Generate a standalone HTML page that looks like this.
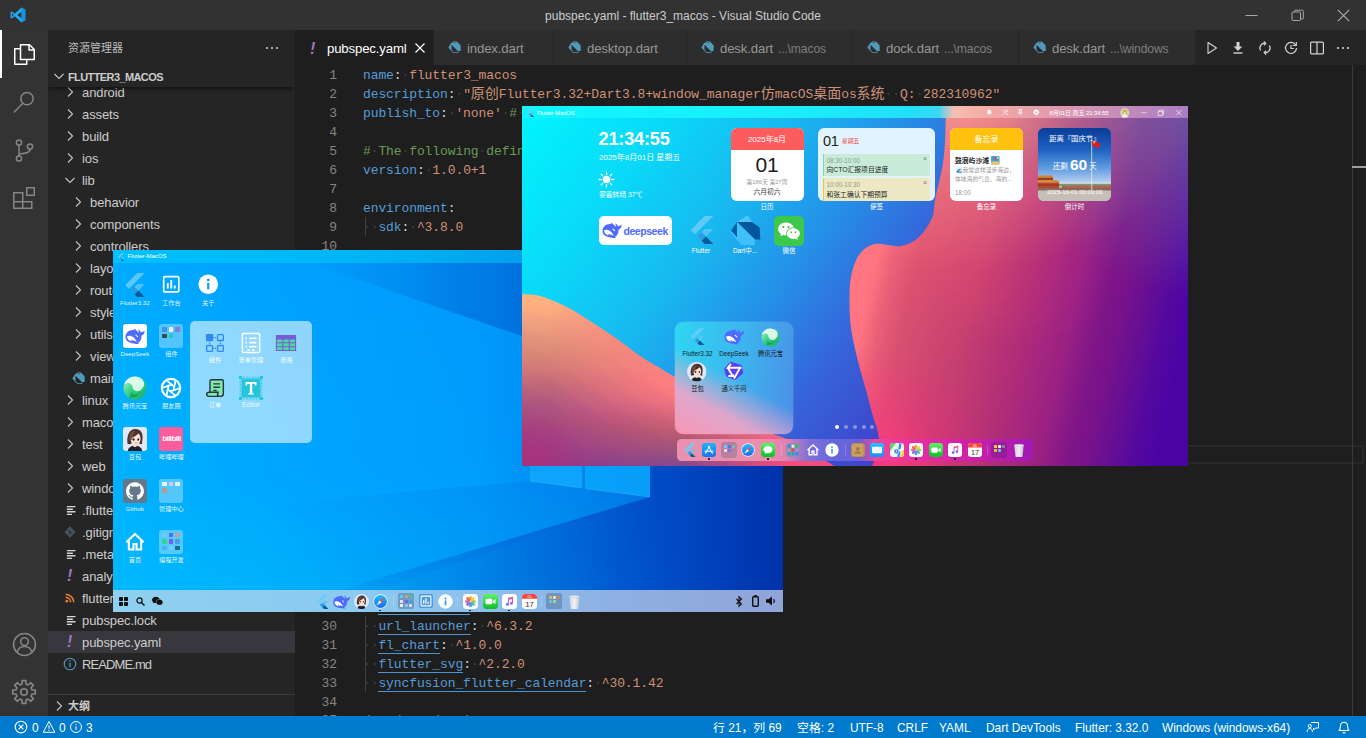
<!DOCTYPE html>
<html lang="zh-CN">
<head>
<meta charset="utf-8">
<title>pubspec.yaml - flutter3_macos - Visual Studio Code</title>
<style>
*{box-sizing:border-box;margin:0;padding:0}
html,body{width:1366px;height:738px;overflow:hidden;background:#1e1e1e}
body{font-family:"Liberation Sans","Noto Sans CJK SC",sans-serif;font-size:13px;color:#ccc;position:relative}
.abs{position:absolute}
svg{display:block;overflow:visible}
/* ---------- vscode chrome ---------- */
#titlebar{position:absolute;left:0;top:0;width:1366px;height:30px;background:#323233}
#titlebar .ttl{position:absolute;left:0;width:1366px;top:1px;height:30px;line-height:30px;text-align:center;font-size:12px;color:#cccccc;letter-spacing:0}
#activity{position:absolute;left:0;top:30px;width:48px;height:686px;background:#333333}
#sidebar{position:absolute;left:48px;top:30px;width:247px;height:686px;background:#252526;overflow:hidden}
#editor{position:absolute;left:295px;top:30px;width:1071px;height:686px;background:#1e1e1e;overflow:hidden}
#status{position:absolute;left:0;top:716px;width:1366px;height:22px;background:#007acc;color:#fff;font-size:11.9px;line-height:22px;white-space:nowrap}
#status span{position:absolute;top:1px}
/* sidebar */
.sb-title{position:absolute;left:20px;top:1px;height:35px;line-height:35px;font-size:11px;color:#bbbbbb}
.sb-head{position:absolute;left:0;top:35px;width:247px;height:22px;line-height:22px;font-size:11px;letter-spacing:-.6px;font-weight:bold;color:#cccccc;padding-left:20px;padding-top:1px;background:#252526;z-index:3;box-shadow:0 3px 3px -1px rgba(0,0,0,.45)}
.row{position:absolute;left:0;width:247px;height:22px;line-height:22px;font-size:13px;letter-spacing:-.1px;color:#cccccc;white-space:nowrap}
.row.sel{background:#37373d}
.row svg.chev{position:absolute;top:3px}
.row .ic{position:absolute;top:0}
.row .nm{position:absolute;top:1px}
/* tabs */
#tabs{position:absolute;left:0;top:0;width:1071px;height:35px;background:#252526}
.tab{position:absolute;top:0;height:35px;background:#2d2d2d;border-right:1px solid #252526;line-height:35px;font-size:13.2px;letter-spacing:-.15px;color:#969696;white-space:nowrap}
.tab.act{background:#1e1e1e;color:#ffffff}
.tab .lbl{position:absolute;top:1px}
.tab .desc{font-size:12.2px;color:#7e7e7e;margin-left:5px}
/* code */
.ln{position:absolute;left:0;width:42px;text-align:right;font-family:"Liberation Mono",monospace;font-size:13px;letter-spacing:-0.1px;color:#858585;height:19px;line-height:19px}
.cl{position:absolute;left:68px;font-family:"Liberation Mono","Noto Sans CJK SC",monospace;font-size:13px;letter-spacing:-0.1px;height:19px;line-height:19px;white-space:pre;color:#d4d4d4}
.z{font-size:14px;letter-spacing:0}.k{color:#569cd6}.s{color:#ce9178}.c{color:#6a9955}.w{color:#404040}
.u{display:inline-block;height:18px;vertical-align:top;box-shadow:inset 0 -1px 0 #4e94ce}
.t{white-space:nowrap}
.lab{font-size:6.5px;line-height:9px;color:#fff;text-align:center}
.lab2{font-size:6.3px;line-height:9px;color:#1a1a1a;text-align:center}
i.d{position:absolute;width:3px;height:3px;border-radius:.8px}
.wl{font-size:6.2px;line-height:9px;color:rgba(255,255,255,.92);text-align:center}
</style>
</head>
<body>

<svg width="0" height="0" style="position:absolute">
<defs>
<linearGradient id="gAS" x1="0" y1="0" x2="0" y2="1"><stop offset="0" stop-color="#1fb3f8"/><stop offset="1" stop-color="#1a70ee"/></linearGradient>
<linearGradient id="gMsg" x1="0" y1="0" x2="0" y2="1"><stop offset="0" stop-color="#5ff26a"/><stop offset="1" stop-color="#0cbd2a"/></linearGradient>
<linearGradient id="gSaf" x1="0" y1="0" x2="0" y2="1"><stop offset="0" stop-color="#1ec0fb"/><stop offset="1" stop-color="#1a6af0"/></linearGradient>
<linearGradient id="gYB" x1="0" y1="0" x2="1" y2="1"><stop offset="0" stop-color="#b8f5d0"/><stop offset=".5" stop-color="#2fcf82"/><stop offset="1" stop-color="#18a865"/></linearGradient>
<linearGradient id="gMail" x1="0" y1="0" x2="0" y2="1"><stop offset="0" stop-color="#1fc4ff"/><stop offset="1" stop-color="#1a8cf5"/></linearGradient>
<linearGradient id="gMus" x1="0" y1="0" x2="0" y2="1"><stop offset="0" stop-color="#fb4a6a"/><stop offset=".55" stop-color="#c850e0"/><stop offset="1" stop-color="#3a80f8"/></linearGradient><linearGradient id="gTrash" x1="0" y1="0" x2="1" y2="0"><stop offset="0" stop-color="#d4d8dc"/><stop offset=".5" stop-color="#f4f6f8"/><stop offset="1" stop-color="#c4c8cc"/></linearGradient>
<symbol id="i-flutter" viewBox="0 0 24 24"><path d="M14.300 0L2.300 12l3.700 3.700L21.700 0z" fill="#6ccbf9" opacity=".85"/><path d="M14.300 11.100L7.900 17.500l3.700 3.700 10.100-10.100z" fill="#5ac3f5" opacity=".9"/><path d="M11.600 21.200L14.300 24h7.400l-6.500-6.500z" fill="#0a5a9c"/><path d="M7.900 17.500l3.700-3.700 3.700 3.700-3.700 3.700z" fill="#2a9de0"/></symbol>
<symbol id="i-dart" viewBox="0 0 24 24"><path d="M4.900 4.800L12.100.3c.9-.4 2-.2 2.700.5l2.200 4z" fill="#5ccbfa" opacity=".75"/><path d="M4.900 4.800H17l6.300 4.600.7 9.800h-4.600z" fill="#01579b"/><path d="M0 12l4.900-7.200v12.700z" fill="#0a5fa3"/><path d="M4.900 4.800l14.500 14.400v4.500H8.200l-3.300-6.200z" fill="#40c0fb"/><path d="M0 12l4.900 5.500 3.300 6.200L.9 14.500C.2 13.700 0 12.800 0 12z" fill="#40c4ff"/></symbol>
<symbol id="i-whale" viewBox="0 0 24 24"><path d="M2.500 13C2.500 8.800 5.800 6 10 6c.7 0 1.300-.7 2.100-.7.500 0 .6.600 1 .9 1 .5 1.800 1.400 2.400 2.700.6-1.300.2-2.600-.4-3.700 1.400.6 2.300 1.700 2.600 3 1.400.1 2.800-.5 3.900-1.600.2 2.700-1.200 4.400-3.200 5.100.2 1 .1 2-.2 3-.5 1.900-1.700 3.300-3.300 4.200l1.600.7c-1.600.5-3.600.4-5.200-.2C6 18.900 2.500 17 2.500 13z" fill="#4d6bfe"/><path d="M4 12.300c1.600-1.200 4.600-.7 6.700 1.100 1.500 1.300 2.600 3 3.100 4.400-1.100-.3-2.100-.8-2.900-1.600l-1 1.100-.9-1.900c-.5.400-.8 1.100-.8 1.900C5.600 16.600 4 14.700 4 12.300z" fill="#fff"/><path d="M12.900 11.100l1.700 1.600" stroke="#fff" stroke-width="1.100" stroke-linecap="round"/></symbol>
<symbol id="i-yuanbao" viewBox="0 0 24 24"><circle cx="12" cy="12" r="11.500" fill="url(#gYB)"/><path d="M12 .5a11.500 11.500 0 0 0-11 8c3-2.500 8-2 8.500 2.500.5 4.500 6 5.500 9 2.500 2.500-2.500 4-6 1-10A11.400 11.400 0 0 0 12 .5z" fill="#eafff2" opacity=".9"/><path d="M6 21.500c4 1 10-1 11-6-2 3.500-7 4-8.500.5-.8 3-1.500 4.500-2.500 5.500z" fill="#0d8a50" opacity=".55"/></symbol>
<symbol id="i-doubao" viewBox="0 0 24 24"><rect width="24" height="24" rx="3" fill="#dde8fc"/><path d="M4.800 24c.3-3.200 3-5.200 7.200-5.200s6.900 2 7.200 5.200z" fill="#1f1f25"/><path d="M10.300 16.500h3.400v3c-1.100.8-2.300.8-3.400 0z" fill="#f9d8c6"/><path d="M4.600 17C3.300 8.800 6.300 2 12.300 2c5.200 0 7.900 4.200 7.200 9.700-.3 2.400-.6 4-.3 5.400-1.600.3-2.900-.2-3.800-1.300H9.600c-1 1.300-2.900 1.600-5 1.200z" fill="#4e332a"/><path d="M7.800 11.200c-.3 4 1.700 6.800 4.800 6.800 3 0 5-2.800 4.900-6.600-.1-2.400-.9-4-2.100-4.900-1.500 1.800-4.200 3.500-7.600 4.700z" fill="#fce2d4"/><path d="M6 12.800C6.300 6.500 8.900 3.900 12.300 3.900 10.700 5.500 9.600 8.600 9.300 13z" fill="#7a5444" opacity=".8"/><ellipse cx="10.600" cy="12.500" rx=".95" ry="1.200" fill="#2a1e1c"/><ellipse cx="15.300" cy="12.500" rx=".9" ry="1.200" fill="#2a1e1c"/><path d="M12 15.700q1.100.8 2.200 0" stroke="#e2736e" stroke-width=".8" fill="none"/></symbol>
<symbol id="i-doubao-c" viewBox="0 0 24 24"><circle cx="12" cy="12" r="12" fill="#dde8fc"/><path d="M5.800 22.300c.6-2.600 3-3.900 6.200-3.900s5.600 1.300 6.200 3.900a12 12 0 0 1-12.400 0z" fill="#1f1f25"/><path d="M10.300 16.500h3.400v2.600c-1.100.8-2.300.8-3.400 0z" fill="#f9d8c6"/><path d="M4.800 16.300C3.600 8.500 6.500 2.200 12.300 2.200c5 0 7.600 4 6.900 9.300-.3 2.300-.6 3.800-.3 5.200-1.500.3-2.800-.2-3.600-1.200H9.600c-1 1.200-2.800 1.500-4.800.8z" fill="#4e332a"/><path d="M8 11c-.3 3.800 1.600 6.500 4.600 6.500 2.900 0 4.800-2.700 4.700-6.300-.1-2.300-.9-3.800-2-4.700-1.400 1.700-4 3.300-7.300 4.500z" fill="#fce2d4"/><path d="M6.200 12.500C6.500 6.500 9 4 12.300 4c-1.500 1.500-2.600 4.500-2.900 8.700z" fill="#7a5444" opacity=".8"/><ellipse cx="10.600" cy="12.300" rx=".9" ry="1.100" fill="#2a1e1c"/><ellipse cx="15.200" cy="12.300" rx=".85" ry="1.100" fill="#2a1e1c"/><path d="M12 15.300q1 .7 2 0" stroke="#e2736e" stroke-width=".8" fill="none"/></symbol>
<symbol id="i-safari" viewBox="0 0 24 24"><circle cx="12" cy="12" r="11.500" fill="#f2f4f6"/><circle cx="12" cy="12" r="10.300" fill="url(#gSaf)"/><path d="M18.500 5.500l-5 8-3-3z" fill="#ff4a3d"/><path d="M5.500 18.500l5-8 3 3z" fill="#fff"/></symbol>
<symbol id="i-appstore" viewBox="0 0 24 24"><rect width="24" height="24" rx="5.500" fill="url(#gAS)"/><path d="M12.800 5.500L7.200 16M11.200 5.500l5.600 10.500M5 14h14M7.200 16l-1 1.800M16.800 16l1 1.800" stroke="#fff" stroke-width="1.700" stroke-linecap="round" fill="none"/></symbol>
<symbol id="i-messages" viewBox="0 0 24 24"><rect width="24" height="24" rx="5.500" fill="url(#gMsg)"/><path d="M12 5c4.400 0 7.800 2.800 7.800 6.300s-3.400 6.300-7.800 6.300c-.8 0-1.600-.1-2.300-.3-.9.900-2.200 1.400-3.500 1.400.8-.7 1.200-1.600 1.200-2.500C5.400 15 4.200 13.300 4.200 11.300 4.200 7.800 7.600 5 12 5z" fill="#fff"/></symbol>
<symbol id="i-launch" viewBox="0 0 24 24"><rect width="24" height="24" rx="5" fill="#8a8fa8" opacity=".75"/><g><rect x="3" y="3" width="5" height="5" rx="1.200" fill="#3b82f6"/><rect x="9.500" y="3" width="5" height="5" rx="1.200" fill="#e8e8e8"/><rect x="16" y="3" width="5" height="5" rx="1.200" fill="#22c55e"/><rect x="3" y="9.500" width="5" height="5" rx="1.200" fill="#94a3b8"/><rect x="9.500" y="9.500" width="5" height="5" rx="1.200" fill="#ef4444"/><rect x="16" y="9.500" width="5" height="5" rx="1.200" fill="#a78bfa"/><rect x="3" y="16" width="5" height="5" rx="1.200" fill="#14b8a6"/><rect x="9.500" y="16" width="5" height="5" rx="1.200" fill="#0ea5e9"/><rect x="16" y="16" width="5" height="5" rx="1.200" fill="#3b82f6"/></g></symbol>
<symbol id="i-home" viewBox="0 0 24 24"><path d="M2.500 12.200L12 3.300l9.500 8.900M5.300 10.200v10h5v-6h3.400v6h5v-10" fill="none" stroke="#fff" stroke-width="2.300" stroke-linejoin="miter"/></symbol>
<symbol id="i-info" viewBox="0 0 24 24"><circle cx="12" cy="12" r="11.500" fill="#fff"/><rect x="10.700" y="10.300" width="2.600" height="7.700" fill="#2196f3"/><circle cx="12" cy="7" r="1.600" fill="#2196f3"/></symbol>
<symbol id="i-contacts" viewBox="0 0 24 24"><rect width="24" height="24" rx="5.500" fill="#b98e4e"/><rect x="2" y="1.500" width="19" height="21" rx="3" fill="#c9a162"/><circle cx="11.500" cy="10" r="3.200" fill="#a57b3e"/><path d="M5.500 18.500c.6-3 3-4.200 6-4.200s5.400 1.200 6 4.200z" fill="#a57b3e"/></symbol>
<symbol id="i-mail" viewBox="0 0 24 24"><rect width="24" height="24" rx="5.500" fill="url(#gMail)"/><rect x="3.500" y="6.500" width="17" height="11" rx="1.500" fill="#fff"/><path d="M4 7.200l8 6.300 8-6.300M4 17l5.500-5M20 17l-5.500-5" stroke="#b8d8f5" stroke-width=".9" fill="none"/></symbol>
<symbol id="i-maps" viewBox="0 0 24 24"><rect width="24" height="24" rx="5.500" fill="#e9f3e4"/><path d="M0 14L10 0H5.500A5.500 5.500 0 0 0 0 5.500z" fill="#5fd06c"/><path d="M24 9L15 24h3.500a5.500 5.500 0 0 0 5.500-5.500z" fill="#f8d24a"/><path d="M14 0h4v24h-4z" fill="#3a8df5" transform="rotate(8 12 12)"/><path d="M0 17l24-9v3L0 20z" fill="#fff"/><circle cx="11" cy="14.500" r="4.200" fill="#1f7cf2" stroke="#fff" stroke-width="1"/><path d="M11 12l1.700 4.200L11 15.400l-1.700.8z" fill="#fff"/></symbol>
<symbol id="i-photos" viewBox="0 0 24 24"><rect width="24" height="24" rx="5.500" fill="#fbfbfb"/><g opacity=".88"><ellipse cx="12" cy="7" rx="2.500" ry="4" fill="#f9a11b"/><ellipse cx="12" cy="7" rx="2.500" ry="4" fill="#f4d21f" transform="rotate(45 12 12)"/><ellipse cx="12" cy="7" rx="2.500" ry="4" fill="#9bcb3c" transform="rotate(90 12 12)"/><ellipse cx="12" cy="7" rx="2.500" ry="4" fill="#39b8a0" transform="rotate(135 12 12)"/><ellipse cx="12" cy="7" rx="2.500" ry="4" fill="#3e8fe0" transform="rotate(180 12 12)"/><ellipse cx="12" cy="7" rx="2.500" ry="4" fill="#7a63c9" transform="rotate(225 12 12)"/><ellipse cx="12" cy="7" rx="2.500" ry="4" fill="#c65db0" transform="rotate(270 12 12)"/><ellipse cx="12" cy="7" rx="2.500" ry="4" fill="#ef5350" transform="rotate(315 12 12)"/></g></symbol>
<symbol id="i-facetime" viewBox="0 0 24 24"><rect width="24" height="24" rx="5.500" fill="url(#gMsg)"/><rect x="4" y="7.500" width="11" height="9" rx="2.200" fill="#fff"/><path d="M15.800 11l4.200-3v8l-4.200-3z" fill="#fff"/></symbol>
<symbol id="i-music" viewBox="0 0 24 24"><rect width="24" height="24" rx="5.500" fill="#fdfdfd"/><path d="M9.500 6.500l8-2v10.300a2.300 2.300 0 1 1-1.500-2.100V7.800l-5 1.300v7.400a2.300 2.300 0 1 1-1.500-2.100z" fill="url(#gMus)"/></symbol>
<symbol id="i-cal" viewBox="0 0 24 24"><rect width="24" height="24" rx="5.500" fill="#fdfdfd"/><path d="M0 5.500A5.500 5.500 0 0 1 5.500 0h13A5.500 5.500 0 0 1 24 5.500V7.500H0z" fill="#f4463d"/><text x="12" y="20" font-family="Liberation Sans,sans-serif" font-size="12.500" text-anchor="middle" fill="#333">17</text><text x="12" y="6" font-family="Liberation Sans,sans-serif" font-size="4.500" text-anchor="middle" fill="#fff">JUL</text></symbol>
<symbol id="i-trash" viewBox="0 0 24 24"><path d="M4 4h16l-2 18.500c-.1.900-.8 1.500-1.700 1.500H7.700c-.9 0-1.600-.6-1.700-1.500z" fill="url(#gTrash)" opacity=".95"/><ellipse cx="12" cy="4" rx="8" ry="1.800" fill="#e8ecef" stroke="#b8bec4" stroke-width=".6"/></symbol>
<symbol id="i-chart" viewBox="0 0 24 24"><rect x="2.200" y="2.200" width="19.600" height="19.600" rx="1.500" fill="none" stroke="#fff" stroke-width="2.200"/><path d="M7.500 10.500v7M12 6.500v11M16.500 13.500v4" stroke="#fff" stroke-width="2.400"/></symbol>
<symbol id="i-wechat" viewBox="0 0 24 24"><path d="M9.300 4.200C5.300 4.200 2 6.900 2 10.300c0 1.900 1.100 3.600 2.700 4.800l-.7 2.100 2.500-1.300c.9.300 1.800.400 2.800.400h.5c-.2-.5-.3-1.100-.3-1.700 0-3.100 3-5.600 6.700-5.600h.5C16.100 6.300 13 4.200 9.300 4.200z" fill="#fff"/><path d="M22.500 14.700c0-2.800-2.800-5.100-6.200-5.100s-6.200 2.300-6.200 5.100 2.800 5.100 6.200 5.100c.8 0 1.500-.1 2.200-.3l2 1.100-.5-1.800c1.500-1 2.500-2.400 2.500-4.100z" fill="#fff"/><circle cx="6.900" cy="8.400" r=".9" fill="#2dc100"/><circle cx="11.700" cy="8.400" r=".9" fill="#2dc100"/><circle cx="14.300" cy="13.500" r=".75" fill="#2dc100"/><circle cx="18.300" cy="13.500" r=".75" fill="#2dc100"/></symbol>
<symbol id="i-tongyi" viewBox="0 0 24 24"><path d="M1 9.600L8.400 1.500 21 5.700l2 8.900-9.400 8.100-10.300-4.200z" fill="#5b3ff2" stroke="#5b3ff2" stroke-width="1.500" stroke-linejoin="round"/><path d="M8.600 3.600L4.700 8.300h16.800M4.700 8.300l6 10.200H5.400M19.600 8.600L13 20.600l-2.400-4" fill="none" stroke="#fff" stroke-width="2.300" stroke-linejoin="miter"/></symbol>
</defs></svg>

<div id="titlebar"><div class="ttl">pubspec.yaml - flutter3_macos - Visual Studio Code</div><svg class="abs" style="left:10px;top:7px" width="16" height="16" viewBox="0 0 16 16"><path d="M11.500 0.600L15.400 2.400v11.200l-3.900 1.800-6.700-6.100-3 2.300-1.200-.6V5l1.200-.6 3 2.300zM11.500 4.700L7.200 8l4.300 3.300zM1.900 6.200v3.600L3.800 8z" fill="#23a9f2"/><path d="M11.500 0.600L15.400 2.400v11.200l-3.900 1.800z" fill="#0f7fd0" opacity=".55"/></svg>
<svg class="abs" style="left:1245px;top:9px" width="13" height="13" viewBox="0 0 13 13"><path d="M.5 6.500h12" stroke="#a8a8a8" stroke-width="1"/></svg>
<svg class="abs" style="left:1291px;top:9px" width="13" height="13" viewBox="0 0 13 13" fill="none" stroke="#a8a8a8" stroke-width="1"><rect x="1" y="3" width="8.500" height="8.500" rx="1"/><path d="M3.500 3V2.200c0-.6.400-1 1-1h6.800c.6 0 1 .4 1 1V9c0 .6-.4 1-1 1H9.700"/></svg>
<svg class="abs" style="left:1337px;top:9px" width="13" height="13" viewBox="0 0 13 13"><path d="M.8.800l11.400 11.400M12.200.8L.8 12.200" stroke="#b0b0b0" stroke-width="1.100"/></svg>
</div>
<div id="activity"><div class="abs" style="left:0;top:0;width:2px;height:48px;background:#fff"></div>
<svg class="abs" style="left:12px;top:12px" width="24" height="24" viewBox="0 0 24 24" fill="none" stroke="#fff" stroke-width="1.5" stroke-linejoin="round"><path d="M8.5 17.5V2.75h9l4.75 4.75v10z"/><path d="M17 2.75V8h5"/><path d="M8.5 6.75H2.75v15.5h12v-4.5"/></svg>
<svg class="abs" style="left:12px;top:60px" width="24" height="24" viewBox="0 0 24 24" fill="none" stroke="#858585" stroke-width="1.5"><circle cx="15" cy="8.6" r="6.2"/><path d="M10.8 13.2L1.8 22.5"/></svg>
<svg class="abs" style="left:12px;top:108px" width="24" height="24" viewBox="0 0 24 24" fill="none" stroke="#858585" stroke-width="1.5"><circle cx="7" cy="4.5" r="2.6"/><circle cx="7" cy="20.5" r="2.6"/><circle cx="18" cy="8.5" r="2.6"/><path d="M7 7.1v10.8M18 11.1c0 4-5 4.4-11 5"/></svg>
<svg class="abs" style="left:12px;top:156px" width="24" height="24" viewBox="0 0 24 24" fill="none" stroke="#858585" stroke-width="1.5"><path d="M1.75 6.75h9v9h9v6.5h-18zM1.75 15.75h9M10.75 15.75v6.5"/><rect x="14.75" y="1.75" width="7.5" height="7.5"/></svg>
<svg class="abs" style="left:11.500px;top:601.500px" width="25" height="25" viewBox="0 0 24 24" fill="none" stroke="#858585" stroke-width="1.5"><circle cx="12" cy="12" r="10.5"/><circle cx="12" cy="9.2" r="3.7"/><path d="M5 19.5c.8-4 3.6-5.6 7-5.6s6.200 1.600 7 5.600"/></svg>
<svg class="abs" style="left:11px;top:649px" width="26" height="26" viewBox="0 0 24 24" fill="none" stroke="#858585" stroke-width="1.5" stroke-linejoin="round"><circle cx="12" cy="12" r="3"/><path d="M10.19 4.62L10.21 1.55L13.79 1.55L13.81 4.62L15.94 5.50L18.12 3.34L20.66 5.88L18.50 8.06L19.38 10.19L22.45 10.21L22.45 13.79L19.38 13.81L18.50 15.94L20.66 18.12L18.12 20.66L15.94 18.50L13.81 19.38L13.79 22.45L10.21 22.45L10.19 19.38L8.06 18.50L5.88 20.66L3.34 18.12L5.50 15.94L4.62 13.81L1.55 13.79L1.55 10.21L4.62 10.19L5.50 8.06L3.34 5.88L5.88 3.34L8.06 5.50Z"/></svg></div>
<div id="sidebar"><div class="sb-title">资源管理器</div>
<svg class="abs" style="left:216px;top:10px" width="16" height="16" viewBox="0 0 16 16"><circle cx="3" cy="8" r="1.1" fill="#c5c5c5"/><circle cx="8" cy="8" r="1.1" fill="#c5c5c5"/><circle cx="13" cy="8" r="1.1" fill="#c5c5c5"/></svg>
<div class="sb-head"><svg class="abs" style="left:3px;top:3px" width="16" height="16" viewBox="0 0 16 16"><path d="M3.5 6l4.5 4.5L12.5 6" fill="none" stroke="#c5c5c5" stroke-width="1.1"/></svg>FLUTTER3_MACOS</div>
<div class="row" style="top:51px"><svg class="chev" style="left:14px" width="16" height="16" viewBox="0 0 16 16"><path d="M6 3.5l4.5 4.5L6 12.5" fill="none" stroke="#c5c5c5" stroke-width="1.1"/></svg><span class="nm" style="left:34px">android</span></div>
<div class="row" style="top:73px"><svg class="chev" style="left:14px" width="16" height="16" viewBox="0 0 16 16"><path d="M6 3.5l4.5 4.5L6 12.5" fill="none" stroke="#c5c5c5" stroke-width="1.1"/></svg><span class="nm" style="left:34px">assets</span></div>
<div class="row" style="top:95px"><svg class="chev" style="left:14px" width="16" height="16" viewBox="0 0 16 16"><path d="M6 3.5l4.5 4.5L6 12.5" fill="none" stroke="#c5c5c5" stroke-width="1.1"/></svg><span class="nm" style="left:34px">build</span></div>
<div class="row" style="top:117px"><svg class="chev" style="left:14px" width="16" height="16" viewBox="0 0 16 16"><path d="M6 3.5l4.5 4.5L6 12.5" fill="none" stroke="#c5c5c5" stroke-width="1.1"/></svg><span class="nm" style="left:34px">ios</span></div>
<div class="row" style="top:139px"><svg class="chev" style="left:14px" width="16" height="16" viewBox="0 0 16 16"><path d="M3.5 6l4.5 4.5L12.5 6" fill="none" stroke="#c5c5c5" stroke-width="1.1"/></svg><span class="nm" style="left:34px">lib</span></div>
<div class="row" style="top:161px"><svg class="chev" style="left:22px" width="16" height="16" viewBox="0 0 16 16"><path d="M6 3.5l4.5 4.5L6 12.5" fill="none" stroke="#c5c5c5" stroke-width="1.1"/></svg><span class="nm" style="left:42px">behavior</span></div>
<div class="row" style="top:183px"><svg class="chev" style="left:22px" width="16" height="16" viewBox="0 0 16 16"><path d="M6 3.5l4.5 4.5L6 12.5" fill="none" stroke="#c5c5c5" stroke-width="1.1"/></svg><span class="nm" style="left:42px">components</span></div>
<div class="row" style="top:205px"><svg class="chev" style="left:22px" width="16" height="16" viewBox="0 0 16 16"><path d="M6 3.5l4.5 4.5L6 12.5" fill="none" stroke="#c5c5c5" stroke-width="1.1"/></svg><span class="nm" style="left:42px">controllers</span></div>
<div class="row" style="top:227px"><svg class="chev" style="left:22px" width="16" height="16" viewBox="0 0 16 16"><path d="M6 3.5l4.5 4.5L6 12.5" fill="none" stroke="#c5c5c5" stroke-width="1.1"/></svg><span class="nm" style="left:42px">layouts</span></div>
<div class="row" style="top:249px"><svg class="chev" style="left:22px" width="16" height="16" viewBox="0 0 16 16"><path d="M6 3.5l4.5 4.5L6 12.5" fill="none" stroke="#c5c5c5" stroke-width="1.1"/></svg><span class="nm" style="left:42px">routes</span></div>
<div class="row" style="top:271px"><svg class="chev" style="left:22px" width="16" height="16" viewBox="0 0 16 16"><path d="M6 3.5l4.5 4.5L6 12.5" fill="none" stroke="#c5c5c5" stroke-width="1.1"/></svg><span class="nm" style="left:42px">styles</span></div>
<div class="row" style="top:293px"><svg class="chev" style="left:22px" width="16" height="16" viewBox="0 0 16 16"><path d="M6 3.5l4.5 4.5L6 12.5" fill="none" stroke="#c5c5c5" stroke-width="1.1"/></svg><span class="nm" style="left:42px">utils</span></div>
<div class="row" style="top:315px"><svg class="chev" style="left:22px" width="16" height="16" viewBox="0 0 16 16"><path d="M6 3.5l4.5 4.5L6 12.5" fill="none" stroke="#c5c5c5" stroke-width="1.1"/></svg><span class="nm" style="left:42px">views</span></div>
<div class="row" style="top:337px"><svg class="ic" style="left:24px;top:5px" width="13" height="12" viewBox="0 0 13 12"><path fill-rule="evenodd" d="M.3 6.600L3 2.300 5.200.7c.6-.4 1.300-.5 1.900-.4l2.200.5 3.400 3.600v5.500h-2.300v1.900H5.100L3 9.600zM3.500 3.800v5.300l1.900 2h4.400V10z" fill="#519aba"/><ellipse cx="6.800" cy="1.250" rx="1.700" ry=".45" fill="#2b3a44"/></svg><span class="nm" style="left:42px">main.dart</span></div>
<div class="row" style="top:359px"><svg class="chev" style="left:14px" width="16" height="16" viewBox="0 0 16 16"><path d="M6 3.5l4.5 4.5L6 12.5" fill="none" stroke="#c5c5c5" stroke-width="1.1"/></svg><span class="nm" style="left:34px">linux</span></div>
<div class="row" style="top:381px"><svg class="chev" style="left:14px" width="16" height="16" viewBox="0 0 16 16"><path d="M6 3.5l4.5 4.5L6 12.5" fill="none" stroke="#c5c5c5" stroke-width="1.1"/></svg><span class="nm" style="left:34px">macos</span></div>
<div class="row" style="top:403px"><svg class="chev" style="left:14px" width="16" height="16" viewBox="0 0 16 16"><path d="M6 3.5l4.5 4.5L6 12.5" fill="none" stroke="#c5c5c5" stroke-width="1.1"/></svg><span class="nm" style="left:34px">test</span></div>
<div class="row" style="top:425px"><svg class="chev" style="left:14px" width="16" height="16" viewBox="0 0 16 16"><path d="M6 3.5l4.5 4.5L6 12.5" fill="none" stroke="#c5c5c5" stroke-width="1.1"/></svg><span class="nm" style="left:34px">web</span></div>
<div class="row" style="top:447px"><svg class="chev" style="left:14px" width="16" height="16" viewBox="0 0 16 16"><path d="M6 3.5l4.5 4.5L6 12.5" fill="none" stroke="#c5c5c5" stroke-width="1.1"/></svg><span class="nm" style="left:34px">windows</span></div>
<div class="row" style="top:469px"><svg class="ic" style="left:17.5px;top:5.5px" width="12" height="11" viewBox="0 0 14 12"><path d="M1 1.5h10M1 4.5h7M1 7.5h10M1 10.5h6" stroke="#d4d7d6" stroke-width="1.6" fill="none"/></svg><span class="nm" style="left:34px">.flutter-plugins</span></div>
<div class="row" style="top:491px"><svg class="ic" style="left:16px;top:5px" width="12" height="12" viewBox="0 0 12 12"><rect x="2" y="2" width="8" height="8" transform="rotate(45 6 6)" fill="#41535b"/><path d="M4.5 4l3 3M6 5.5v3" stroke="#252526" stroke-width="1"/></svg><span class="nm" style="left:34px">.gitignore</span></div>
<div class="row" style="top:513px"><svg class="ic" style="left:17.5px;top:5.5px" width="12" height="11" viewBox="0 0 14 12"><path d="M1 1.5h10M1 4.5h7M1 7.5h10M1 10.5h6" stroke="#d4d7d6" stroke-width="1.6" fill="none"/></svg><span class="nm" style="left:34px">.metadata</span></div>
<div class="row" style="top:535px"><span class="ic" style="left:19px;color:#a074c4;font-size:16px;font-style:italic;font-weight:bold;font-family:'Liberation Sans',sans-serif">!</span><span class="nm" style="left:34px">analysis_options.yaml</span></div>
<div class="row" style="top:557px"><svg class="ic" style="left:17px;top:6px" width="10" height="10" viewBox="0 0 12 12"><circle cx="2.2" cy="9.8" r="1.7" fill="#e37933"/><path d="M0.8 5.2a6 6 0 0 1 6 6M0.8 1.6a9.6 9.6 0 0 1 9.6 9.6" stroke="#e37933" stroke-width="1.9" fill="none"/></svg><span class="nm" style="left:34px">flutter3_macos.iml</span></div>
<div class="row" style="top:579px"><svg class="ic" style="left:17.5px;top:5.5px" width="12" height="11" viewBox="0 0 14 12"><path d="M1 1.5h10M1 4.5h7M1 7.5h10M1 10.5h6" stroke="#d4d7d6" stroke-width="1.6" fill="none"/></svg><span class="nm" style="left:34px">pubspec.lock</span></div>
<div class="row sel" style="top:601px"><span class="ic" style="left:19px;color:#a074c4;font-size:16px;font-style:italic;font-weight:bold;font-family:'Liberation Sans',sans-serif">!</span><span class="nm" style="left:34px">pubspec.yaml</span></div>
<div class="row" style="top:623px"><svg class="ic" style="left:15px;top:4px" width="14" height="14" viewBox="0 0 14 14"><circle cx="7" cy="7" r="5.8" fill="none" stroke="#519aba" stroke-width="1.1"/><path d="M7 6v4.2" stroke="#519aba" stroke-width="1.3"/><circle cx="7" cy="4.1" r=".8" fill="#519aba"/></svg><span class="nm" style="left:34px;letter-spacing:-.9px">README.md</span></div>
<div class="abs" style="left:0;top:664px;width:247px;height:1px;background:#3c3c3c"></div>
<div class="abs" style="left:0;top:665px;width:247px;height:22px;line-height:22px;font-size:11px;font-weight:bold;color:#cccccc;padding-left:20px"><svg class="abs" style="left:3px;top:3px" width="16" height="16" viewBox="0 0 16 16"><path d="M6 3.5l4.5 4.5L6 12.5" fill="none" stroke="#c5c5c5" stroke-width="1.1"/></svg>大纲</div></div>
<div id="editor"><div id="tabs">
<div class="tab act" style="left:0px;width:139px"><span class="lbl" style="left:15px;color:#a074c4;font-size:16px;font-style:italic;font-weight:bold;font-family:'Liberation Sans',sans-serif">!</span><span class="lbl" style="left:32px">pubspec.yaml</span><svg class="abs" style="left:117px;top:10px" width="16" height="16" viewBox="0 0 16 16"><path d="M3.5 3.5l9 9M12.5 3.5l-9 9" stroke="#fff" stroke-width="1.2"/></svg></div>
<div class="tab" style="left:139px;width:120px"><svg class="abs" style="left:14px;top:11px" width="13" height="12" viewBox="0 0 13 12"><path fill-rule="evenodd" d="M.3 6.600L3 2.300 5.200.7c.6-.4 1.300-.5 1.900-.4l2.200.5 3.400 3.600v5.500h-2.300v1.900H5.100L3 9.600zM3.500 3.800v5.300l1.900 2h4.400V10z" fill="#519aba"/><ellipse cx="6.800" cy="1.250" rx="1.700" ry=".45" fill="#2b3a44"/></svg><span class="lbl" style="left:33px">index.dart</span></div>
<div class="tab" style="left:259px;width:133px"><svg class="abs" style="left:14px;top:11px" width="13" height="12" viewBox="0 0 13 12"><path fill-rule="evenodd" d="M.3 6.600L3 2.300 5.200.7c.6-.4 1.300-.5 1.900-.4l2.200.5 3.400 3.600v5.500h-2.300v1.900H5.100L3 9.600zM3.500 3.800v5.300l1.900 2h4.400V10z" fill="#519aba"/><ellipse cx="6.800" cy="1.250" rx="1.700" ry=".45" fill="#2b3a44"/></svg><span class="lbl" style="left:33px">desktop.dart</span></div>
<div class="tab" style="left:392px;width:166px"><svg class="abs" style="left:14px;top:11px" width="13" height="12" viewBox="0 0 13 12"><path fill-rule="evenodd" d="M.3 6.600L3 2.300 5.200.7c.6-.4 1.300-.5 1.900-.4l2.200.5 3.400 3.600v5.500h-2.300v1.900H5.100L3 9.600zM3.500 3.800v5.300l1.900 2h4.400V10z" fill="#519aba"/><ellipse cx="6.800" cy="1.250" rx="1.700" ry=".45" fill="#2b3a44"/></svg><span class="lbl" style="left:33px">desk.dart<span class="desc">...\macos</span></span></div>
<div class="tab" style="left:558px;width:166px"><svg class="abs" style="left:14px;top:11px" width="13" height="12" viewBox="0 0 13 12"><path fill-rule="evenodd" d="M.3 6.600L3 2.300 5.200.7c.6-.4 1.300-.5 1.900-.4l2.200.5 3.400 3.600v5.500h-2.300v1.900H5.100L3 9.600zM3.500 3.800v5.300l1.900 2h4.400V10z" fill="#519aba"/><ellipse cx="6.800" cy="1.250" rx="1.700" ry=".45" fill="#2b3a44"/></svg><span class="lbl" style="left:33px">dock.dart<span class="desc">...\macos</span></span></div>
<div class="tab" style="left:724px;width:177px"><svg class="abs" style="left:14px;top:11px" width="13" height="12" viewBox="0 0 13 12"><path fill-rule="evenodd" d="M.3 6.600L3 2.300 5.200.7c.6-.4 1.300-.5 1.900-.4l2.200.5 3.400 3.600v5.500h-2.300v1.900H5.100L3 9.600zM3.500 3.800v5.300l1.900 2h4.400V10z" fill="#519aba"/><ellipse cx="6.800" cy="1.250" rx="1.700" ry=".45" fill="#2b3a44"/></svg><span class="lbl" style="left:33px">desk.dart<span class="desc">...\windows</span></span></div>
<svg class="abs" style="left:909px;top:10px" width="16" height="16" viewBox="0 0 16 16"><path d="M4 2.5v11l8.500-5.500z" fill="none" stroke="#d4d4d4" stroke-width="1.1" stroke-linejoin="round"/></svg>
<svg class="abs" style="left:935px;top:10px" width="16" height="16" viewBox="0 0 16 16"><path d="M6.500 2h3v4.500h2.800L8 11 3.700 6.500h2.800z" fill="#d4d4d4"/><path d="M3.500 13h9" stroke="#d4d4d4" stroke-width="1.4"/></svg>
<svg class="abs" style="left:962px;top:10px" width="16" height="16" viewBox="0 0 16 16" fill="none" stroke="#d4d4d4" stroke-width="1.2"><path d="M3.600 10.500a4.800 4.800 0 0 1 4.900-7.200M12.400 5.500a4.800 4.800 0 0 1-4.900 7.200"/><path d="M6.800 1.500l2 1.900-2 1.900M9.200 14.500l-2-1.900 2-1.900"/></svg>
<svg class="abs" style="left:988px;top:10px" width="16" height="16" viewBox="0 0 16 16" fill="none" stroke="#d4d4d4" stroke-width="1.2"><path d="M12.800 5.200a5.500 5.500 0 1 0 .7 2.800"/><path d="M13.300 2v3.500h-3.500M8 5v3.500h2.800"/></svg>
<svg class="abs" style="left:1014px;top:10px" width="16" height="16" viewBox="0 0 16 16" fill="none" stroke="#d4d4d4" stroke-width="1.2"><rect x="1.600" y="2.100" width="12.800" height="11.800" rx="1"/><path d="M8 2v12"/></svg>
<svg class="abs" style="left:1040px;top:10px" width="16" height="16" viewBox="0 0 16 16"><circle cx="3" cy="8" r="1.100" fill="#d4d4d4"/><circle cx="8" cy="8" r="1.100" fill="#d4d4d4"/><circle cx="13" cy="8" r="1.100" fill="#d4d4d4"/></svg>
</div>
<div class="ln" style="top:36px">1</div><div class="cl" style="top:36px"><span class="k">name</span>:<span class="w">·</span><span class="s">flutter3_macos</span></div>
<div class="ln" style="top:55px">2</div><div class="cl" style="top:55px"><span class="k">description</span>:<span class="w">·</span><span class="s">"<span class="z">原创</span>Flutter3.32+Dart3.8+window_manager<span class="z">仿</span>macOS<span class="z">桌面</span>os<span class="z">系统</span><span class="w">·</span><span class="w">·</span>Q:<span class="w">·</span>282310962"</span></div>
<div class="ln" style="top:74px">3</div><div class="cl" style="top:74px"><span class="k">publish_to</span>:<span class="w">·</span><span class="s">'none'</span><span class="w">·</span><span class="c">#<span class="w">·</span>Remove this line if you wish to publish to pub.dev</span></div>
<div class="ln" style="top:93px">4</div><div class="cl" style="top:93px"></div>
<div class="ln" style="top:112px">5</div><div class="cl" style="top:112px"><span class="c">#<span class="w">·</span>The<span class="w">·</span>following<span class="w">·</span>defines the version and build number for your application.</span></div>
<div class="ln" style="top:131px">6</div><div class="cl" style="top:131px"><span class="k">version</span>:<span class="w">·</span><span class="s">1.0.0+1</span></div>
<div class="ln" style="top:150px">7</div><div class="cl" style="top:150px"></div>
<div class="ln" style="top:169px">8</div><div class="cl" style="top:169px"><span class="k">environment</span>:</div>
<div class="ln" style="top:188px">9</div><div class="cl" style="top:188px"><span class="w">·</span><span class="w">·</span><span class="k">sdk</span>:<span class="w">·</span><span class="s">^3.8.0</span></div>
<div class="ln" style="top:207px">10</div><div class="cl" style="top:207px"></div>
<div class="ln" style="top:587px">30</div><div class="cl" style="top:587px"><span class="w">·</span><span class="w">·</span><span class="k u">url_launcher</span>:<span class="w">·</span><span class="s">^6.3.2</span></div>
<div class="ln" style="top:606px">31</div><div class="cl" style="top:606px"><span class="w">·</span><span class="w">·</span><span class="k u">fl_chart</span>:<span class="w">·</span><span class="s">^1.0.0</span></div>
<div class="ln" style="top:625px">32</div><div class="cl" style="top:625px"><span class="w">·</span><span class="w">·</span><span class="k u">flutter_svg</span>:<span class="w">·</span><span class="s">^2.2.0</span></div>
<div class="ln" style="top:644px">33</div><div class="cl" style="top:644px"><span class="w">·</span><span class="w">·</span><span class="k u">syncfusion_flutter_calendar</span>:<span class="w">·</span><span class="s">^30.1.42</span></div>
<div class="ln" style="top:663px">34</div><div class="cl" style="top:663px"></div>
<div class="ln" style="top:681px">35</div><div class="cl" style="top:681px"><span class="k">dev_dependencies</span>:</div>
<div class="abs" style="left:70px;top:187px;width:1px;height:19px;background:#404040"></div>
<div class="abs" style="left:70px;top:586px;width:1px;height:76px;background:#404040"></div>
<div class="abs" style="left:83px;top:584px;width:92px;height:1px;background:#569cd6"></div>
<div class="abs" style="left:68px;top:415px;width:1001px;height:19px;border:2px solid #282828;border-left:none"></div>
<div class="abs" style="left:1057px;top:35px;width:1px;height:651px;background:#3a3a3a"></div>
<div class="abs" style="left:1057px;top:136px;width:14px;height:2px;background:#a0a0a0"></div></div>
<div id="status"><svg class="abs" style="left:14px;top:4px" width="14" height="14" viewBox="0 0 14 14" fill="none" stroke="#fff" stroke-width="1.150"><circle cx="7" cy="7" r="5.800"/><path d="M4.600 4.600l4.800 4.800M9.400 4.600l-4.800 4.800"/></svg>
<span style="left:32px">0</span>
<svg class="abs" style="left:42px;top:4px" width="14" height="14" viewBox="0 0 14 14" fill="none" stroke="#fff" stroke-width="1"><path d="M7 1.500l5.800 10.800H1.200z" stroke-linejoin="round"/><path d="M7 5.200v3.600M7 9.800v1.200"/></svg>
<span style="left:59px">0</span>
<svg class="abs" style="left:69px;top:4px" width="14" height="14" viewBox="0 0 14 14" fill="none" stroke="#fff" stroke-width="1"><circle cx="7" cy="7" r="5.500"/><path d="M7 6.200v3.800M7 3.800v1.200"/></svg>
<span style="left:86px">3</span>
<span style="left:713px">行 21，列 69</span>
<span style="left:797px">空格: 2</span>
<span style="left:850px">UTF-8</span>
<span style="left:897px">CRLF</span>
<span style="left:939px">YAML</span>
<span style="left:986px">Dart DevTools</span>
<span style="left:1075px">Flutter: 3.32.0</span>
<span style="left:1162px">Windows (windows-x64)</span>
<svg class="abs" style="left:1306px;top:4px" width="14" height="14" viewBox="0 0 14 14" fill="none" stroke="#fff" stroke-width="1"><path d="M5 2.500h7.500v5.500h-3l-2 2v-2"/><circle cx="3.800" cy="6" r="1.600"/><path d="M1.200 12c0-2.500 1-3.500 2.600-3.500s2.600 1 2.600 3.500"/></svg>
<svg class="abs" style="left:1337px;top:4px" width="14" height="14" viewBox="0 0 14 14" fill="none" stroke="#fff" stroke-width="1.100"><path d="M2 10.500c1.500-1 1.200-3 1.500-5 .3-2 1.600-3.300 3.500-3.300s3.200 1.300 3.500 3.300c.3 2 0 4 1.500 5z" stroke-linejoin="round"/><path d="M5.800 12.200a1.300 1.300 0 0 0 2.400 0"/></svg></div>
<!-- WINDOWS-STYLE WINDOW -->
<div id="winw" class="abs" style="left:113px;top:250px;width:670px;height:362px;background:#00a2ff;overflow:hidden"><svg class="abs" style="left:0;top:0" width="670" height="362" viewBox="0 0 670 362">
<defs>
<linearGradient id="wbg" gradientUnits="userSpaceOnUse" x1="0" y1="0" x2="670" y2="0"><stop offset="0" stop-color="#00b2ff"/><stop offset=".25" stop-color="#00a6ff"/><stop offset=".55" stop-color="#009cfc"/><stop offset=".70" stop-color="#0082ec"/><stop offset=".81" stop-color="#004cc4"/><stop offset="1" stop-color="#002ea8"/></linearGradient>
<linearGradient id="wv" gradientUnits="userSpaceOnUse" x1="0" y1="0" x2="0" y2="362"><stop offset="0" stop-color="#0090ff" stop-opacity=".25"/><stop offset=".5" stop-color="#0090ff" stop-opacity="0"/><stop offset=".75" stop-color="#00c0f8" stop-opacity=".2"/><stop offset="1" stop-color="#00c4f6" stop-opacity=".45"/></linearGradient>
<linearGradient id="wwedge" gradientUnits="userSpaceOnUse" x1="185" y1="0" x2="480" y2="0"><stop offset="0" stop-color="#0088ee" stop-opacity="0"/><stop offset=".2" stop-color="#0084ea" stop-opacity=".3"/><stop offset=".5" stop-color="#007ce4" stop-opacity=".8"/><stop offset=".78" stop-color="#0070dc" stop-opacity="1"/><stop offset="1" stop-color="#0068d8"/></linearGradient>
<linearGradient id="wbeam" gradientUnits="userSpaceOnUse" x1="200" y1="0" x2="670" y2="0"><stop offset="0" stop-color="#0070e0" stop-opacity="0"/><stop offset=".38" stop-color="#0064d6" stop-opacity=".6"/><stop offset=".77" stop-color="#0048c2" stop-opacity=".95"/><stop offset="1" stop-color="#0030aa" stop-opacity=".97"/></linearGradient>
<linearGradient id="wbeam2" gradientUnits="userSpaceOnUse" x1="150" y1="0" x2="540" y2="0"><stop offset="0" stop-color="#0088f0" stop-opacity="0"/><stop offset="1" stop-color="#0080ec" stop-opacity=".7"/></linearGradient>
</defs>
<rect width="670" height="362" fill="url(#wbg)"/>
<rect width="670" height="362" fill="url(#wv)"/>
<path d="M150,0L196,13L409,86L430,93L540,93L540,0Z" fill="url(#wwedge)"/>
<path d="M417,231L0,268L0,362L200,362L537,247Z" fill="url(#wbeam2)"/>
<path d="M537,247L120,372L670,372L670,120L537,120Z" fill="url(#wbeam)"/>
<path d="M417,150L469,150L469,238L417,231Z" fill="#10a8ff" opacity=".85"/>
<path d="M472,150L537,150L537,247L472,238.500Z" fill="#08a4fc" opacity=".9"/>
<path d="M417,231L469,238M472,238.500L537,247" stroke="#40c0ff" stroke-width=".6" opacity=".7"/>
</svg>
<div class="abs" style="left:0;top:0;width:670px;height:12.500px;background:linear-gradient(90deg,rgba(0,200,255,.75),rgba(0,190,245,.7) 45%,rgba(0,160,235,.6) 100%)"></div>
<svg class="abs" style="left:4px;top:2.5px" width="8" height="8"><use href="#i-flutter"/></svg>
<div class="abs t" style="left:14.500px;top:0;height:12.500px;line-height:12.500px;font-size:6px;color:#fff">Flutter-MacOS</div>
<svg class="abs" style="left:9.899999999999999px;top:22.5px" width="24" height="24"><use href="#i-flutter"/></svg>
<div class="abs t wl" style="left:-8.100000000000001px;top:47.5px;width:60px">Flutter3.32</div>
<svg class="abs" style="left:49.15px;top:25.25px" width="18.5" height="18.5"><use href="#i-chart"/></svg>
<div class="abs t wl" style="left:28.4px;top:47.5px;width:60px">工作台</div>
<svg class="abs" style="left:85.05px;top:24.25px" width="20.5" height="20.5"><use href="#i-info"/></svg>
<div class="abs t wl" style="left:65.3px;top:47.5px;width:60px">关于</div>
<div class="abs" style="left:9.899999999999999px;top:74.2px;width:24px;height:24px;border-radius:3px;background:#fff"></div><svg class="abs" style="left:9.899999999999999px;top:73.9px" width="24" height="24"><use href="#i-whale"/></svg>
<div class="abs t wl" style="left:-8.100000000000001px;top:99.2px;width:60px">DeepSeek</div>
<div class="abs" style="left:46.4px;top:74.2px;width:24px;height:24px;border-radius:3px;background:rgba(255,255,255,.32)"><i class="d" style="left:3px;top:3px;width:4.500px;height:4.500px;background:#4a90e8"></i><i class="d" style="left:9.5px;top:3px;width:4.500px;height:4.500px;background:#e8f0f8"></i><i class="d" style="left:16px;top:3px;width:4.500px;height:4.500px;background:#8a7ad8"></i><i class="d" style="left:3px;top:9.5px;width:4.500px;height:4.500px;background:#3a4a58"></i><i class="d" style="left:9.5px;top:9.5px;width:4.500px;height:4.500px;background:#2ec4b0"></i></div>
<div class="abs t wl" style="left:28.4px;top:99.2px;width:60px">组件</div>
<svg class="abs" style="left:9.899999999999999px;top:125.9px" width="24" height="24"><use href="#i-yuanbao"/></svg>
<div class="abs t wl" style="left:-8.100000000000001px;top:150.9px;width:60px">腾讯元宝</div>
<svg class="abs" style="left:47.4px;top:126.9px" width="22" height="22" viewBox="0 0 24 24"><circle cx="12" cy="12" r="10" fill="none" stroke="#fff" stroke-width="2.400"/><path d="M22.00 12.00L10.45 15.91" stroke="#fff" stroke-width="1.900"/><path d="M17.00 20.66L7.85 12.61" stroke="#fff" stroke-width="1.900"/><path d="M7.00 20.66L9.39 8.71" stroke="#fff" stroke-width="1.900"/><path d="M2.00 12.00L13.55 8.09" stroke="#fff" stroke-width="1.900"/><path d="M7.00 3.34L16.15 11.39" stroke="#fff" stroke-width="1.900"/><path d="M17.00 3.34L14.61 15.29" stroke="#fff" stroke-width="1.900"/></svg>
<div class="abs t wl" style="left:28.4px;top:150.9px;width:60px">朋友圈</div>
<svg class="abs" style="left:9.899999999999999px;top:177.0px" width="24" height="24"><use href="#i-doubao"/></svg>
<div class="abs t wl" style="left:-8.100000000000001px;top:202px;width:60px">豆包</div>
<div class="abs" style="left:46.4px;top:177px;width:24px;height:24px;border-radius:3px;background:#fb5c9c;color:#fff;font-size:8px;line-height:24px;text-align:center;font-weight:bold;letter-spacing:-.6px;font-family:'Liberation Sans',sans-serif">bilibili</div>
<div class="abs t wl" style="left:28.4px;top:202px;width:60px">哔哩哔哩</div>
<div class="abs" style="left:9.899999999999999px;top:228.7px;width:24px;height:24px;border-radius:3px;background:#64788c"></div><svg class="abs" style="left:12.899999999999999px;top:231.7px" width="18" height="18" viewBox="0 0 16 16"><path fill="#fff" d="M8 .2a8 8 0 0 0-2.530 15.590c.4.070.550-.170.550-.380l-.010-1.490c-2.010.370-2.530-.490-2.690-.940-.090-.230-.480-.940-.820-1.130-.280-.150-.680-.520-.010-.530.630-.010 1.080.580 1.230.820.720 1.210 1.870.870 2.330.660.070-.520.280-.870.510-1.070-1.780-.200-3.640-.890-3.640-3.950 0-.870.310-1.590.820-2.150-.080-.200-.360-1.020.080-2.120 0 0 .670-.210 2.200.820a7.420 7.420 0 0 1 4 0c1.530-1.040 2.200-.820 2.200-.820.440 1.100.160 1.920.080 2.120.510.560.820 1.270.820 2.150 0 3.070-1.870 3.750-3.650 3.950.290.250.540.730.540 1.480l-.010 2.200c0 .210.150.460.550.380A8.010 8.010 0 0 0 8 .2z"/></svg>
<div class="abs t wl" style="left:-8.100000000000001px;top:253.7px;width:60px">Github</div>
<div class="abs" style="left:46.4px;top:228.7px;width:24px;height:24px;border-radius:3px;background:rgba(255,255,255,.32)"><i class="d" style="left:3px;top:3px;width:4.500px;height:4.500px;background:#e8f4ff"></i><i class="d" style="left:9.5px;top:3px;width:4.500px;height:4.500px;background:#d8c8e8"></i><i class="d" style="left:16px;top:3px;width:4.500px;height:4.500px;background:#e8f0f8"></i><i class="d" style="left:3px;top:9.5px;width:4.500px;height:4.500px;background:#b89a8a"></i></div>
<div class="abs t wl" style="left:28.4px;top:253.7px;width:60px">管理中心</div>
<svg class="abs" style="left:10.899999999999999px;top:280.9px" width="22" height="22"><use href="#i-home"/></svg>
<div class="abs t wl" style="left:-8.100000000000001px;top:304.9px;width:60px">首页</div>
<div class="abs" style="left:46.4px;top:279.9px;width:24px;height:24px;border-radius:3px;background:rgba(255,255,255,.32)"><i class="d" style="left:3px;top:3px;width:4.500px;height:4.500px;background:#6ccbf9"></i><i class="d" style="left:9.5px;top:3px;width:4.500px;height:4.500px;background:#4d6bfe"></i><i class="d" style="left:16px;top:3px;width:4.500px;height:4.500px;background:#c8a090"></i><i class="d" style="left:3px;top:9.5px;width:4.500px;height:4.500px;background:#3fcf8a"></i><i class="d" style="left:9.5px;top:9.5px;width:4.500px;height:4.500px;background:#7a5af5"></i><i class="d" style="left:16px;top:9.5px;width:4.500px;height:4.500px;background:#4aa0e8"></i><i class="d" style="left:3px;top:16px;width:4.500px;height:4.500px;background:#4ab0f0"></i><i class="d" style="left:9.5px;top:16px;width:4.500px;height:4.500px;background:#88c8f0"></i><i class="d" style="left:16px;top:16px;width:4.500px;height:4.500px;background:#1a6a8a"></i></div>
<div class="abs t wl" style="left:28.4px;top:304.9px;width:60px">编程开发</div>
<div class="abs" style="left:76.600px;top:71px;width:122px;height:122px;border-radius:5px;background:rgba(255,255,255,.56)"></div>
<svg class="abs" style="left:91.9px;top:82.8px" width="20" height="20" viewBox="0 0 24 24" fill="none" stroke="#2f8af5" stroke-width="1.600"><rect x="2" y="2" width="7" height="7" fill="#2f8af5"/><rect x="15" y="2" width="7" height="7" rx="1"/><rect x="2" y="15" width="7" height="7" rx="1"/><rect x="15" y="15" width="7" height="7" rx="1"/><path d="M9 5.500h6M5.500 9v6M18.500 9v6M9 18.500h6" stroke-dasharray="1.500 1.200"/></svg>
<div class="abs t wl" style="left:71.9px;top:104.8px;width:60px">组件</div>
<svg class="abs" style="left:127.9px;top:81.8px" width="20" height="22" viewBox="0 0 22 24" fill="none" stroke="#fff" stroke-width="1.700"><rect x="1.500" y="1.500" width="19" height="21" rx="1.500"/><path d="M5 7h1.500M9 7h8M5 11.500h1.500M9 11.500h8M5 16h1.500M9 16h8M7 19.800h3M12 19.800h3" stroke-width="1.900"/></svg>
<div class="abs t wl" style="left:107.9px;top:104.8px;width:60px">表单管理</div>
<svg class="abs" style="left:163.4px;top:84.8px" width="20" height="16" viewBox="0 0 24 19"><rect x=".5" y=".5" width="23" height="18" fill="#4fd8a0"/><rect x=".5" y=".5" width="23" height="4" fill="#7a5adc"/><path d="M.500 4.500h23M.500 9.200h23M.500 13.900h23M8.200 .5v18M15.900 .5v18M.500 .5h23v18h-23z" stroke="#7a5adc" stroke-width="1.300" fill="none"/></svg>
<div class="abs t wl" style="left:143.4px;top:104.8px;width:60px">表格</div>
<svg class="abs" style="left:91.9px;top:128.4px" width="20" height="20" viewBox="0 0 24 24" fill="none" stroke="#2a3448" stroke-width="1.700" stroke-linejoin="round"><path d="M6 17V3.500c0-.800.700-1.500 1.500-1.500h13c.800 0 1.500.7 1.500 1.500V19c0 1.700-1.300 3-3 3H5c-1.700 0-3-1.300-3-2.500S3 17 5 17h11c0 0-1 .800-1 2.500S16.500 22 18 22" fill="#7fe8a8"/><path d="M10 7h8M10 11h8M10 15h4"/></svg>
<div class="abs t wl" style="left:71.9px;top:150.4px;width:60px">订单</div>
<svg class="abs" style="left:125.9px;top:126.4px" width="24" height="24" viewBox="0 0 24 24"><rect x="2.500" y="2.500" width="19" height="19" fill="#26c6da"/><rect x="1.200" y="1.200" width="21.600" height="21.600" fill="none" stroke="#26c6da" stroke-width="1" stroke-dasharray="1.500 1.500"/><rect x="0" y="0" width="3" height="3" fill="#26c6da"/><rect x="21" y="0" width="3" height="3" fill="#26c6da"/><rect x="0" y="21" width="3" height="3" fill="#26c6da"/><rect x="21" y="21" width="3" height="3" fill="#26c6da"/><path d="M6.500 6h11v3.500h-1.300l-.5-1.700h-2.500v9.200l1.600.5V18.500H9.200V17.500l1.600-.5V7.800H8.300l-.5 1.700H6.500z" fill="#fff"/></svg>
<div class="abs t wl"  style="left:107.9px;top:150.4px;width:60px;font-size:6.800px">Editor</div>
<div class="abs" style="left:0;top:340px;width:670px;height:22px;background:linear-gradient(90deg,#8fd0f0 0,#8ccaf0 35%,#8cc0ec 55%,#8eb0e2 75%,#90a4d8 100%)"></div>
<svg class="abs" style="left:5.500px;top:346.500px" width="9" height="9" viewBox="0 0 9 9"><rect x="0" y="0" width="4" height="4" rx=".7" fill="#111"/><rect x="5" y="0" width="4" height="4" rx=".7" fill="#111"/><rect x="0" y="5" width="4" height="4" rx=".7" fill="#111"/><rect x="5" y="5" width="4" height="4" rx=".7" fill="#111"/></svg>
<svg class="abs" style="left:22.500px;top:346.500px" width="9" height="9" viewBox="0 0 9 9"><circle cx="3.500" cy="3.500" r="2.600" fill="none" stroke="#111" stroke-width="1.200"/><path d="M5.400 5.400L8.500 8.500" stroke="#111" stroke-width="1.400"/></svg>
<svg class="abs" style="left:38.500px;top:346px" width="11" height="10" viewBox="2 4 21 17"><path d="M9.300 4.200C5.300 4.200 2 6.900 2 10.300c0 1.900 1.100 3.600 2.700 4.800l-.7 2.100 2.500-1.300c.9.300 1.800.400 2.800.400h.5c-.2-.5-.3-1.100-.3-1.700 0-3.100 3-5.600 6.700-5.600h.5C16.100 6.300 13 4.200 9.300 4.200z" fill="#111"/><path d="M22.500 14.700c0-2.800-2.800-5.100-6.200-5.100s-6.200 2.300-6.200 5.100 2.800 5.100 6.200 5.100c.8 0 1.500-.1 2.200-.3l2 1.100-.5-1.800c1.500-1 2.500-2.400 2.500-4.100z" fill="#111"/></svg>
<svg class="abs" style="left:201.5px;top:343.5px" width="15" height="15"><use href="#i-flutter"/></svg>
<svg class="abs" style="left:217.5px;top:340.5px" width="21" height="21"><use href="#i-whale"/></svg>
<svg class="abs" style="left:240.5px;top:343.5px" width="15" height="15"><use href="#i-doubao-c"/></svg>
<svg class="abs" style="left:259.5px;top:343.5px" width="15" height="15"><use href="#i-safari"/></svg>
<div class="abs" style="left:279.5px;top:345.500px;width:1px;height:10px;background:rgba(255,255,255,.22)"></div>
<div class="abs" style="left:285px;top:343px;width:16px;height:16px;border-radius:2.500px;background:rgba(90,120,150,.55)"><i class="d" style="left:2px;top:2px;background:#6ccbf9"></i><i class="d" style="left:6.500px;top:2px;background:#c8a090"></i><i class="d" style="left:11px;top:2px;background:#3fcf8a"></i><i class="d" style="left:2px;top:6.500px;background:#e8e8f0"></i><i class="d" style="left:6.500px;top:6.500px;background:#7a5af5"></i><i class="d" style="left:11px;top:6.500px;background:#4aa0e8"></i><i class="d" style="left:2px;top:11px;background:#f0f0f0"></i><i class="d" style="left:6.500px;top:11px;background:#88c8f0"></i><i class="d" style="left:11px;top:11px;background:#d8e8f0"></i></div>
<div class="abs" style="left:306px;top:344px;width:14px;height:14px;border-radius:2px;background:#4f9ad8"></div><svg class="abs" style="left:307px;top:345px" width="12" height="12"><use href="#i-chart"/></svg>
<svg class="abs" style="left:324.5px;top:343.5px" width="15" height="15"><use href="#i-info"/></svg>
<div class="abs" style="left:343.5px;top:345.500px;width:1px;height:10px;background:rgba(255,255,255,.22)"></div>
<svg class="abs" style="left:349.5px;top:343.5px" width="15" height="15"><use href="#i-photos"/></svg>
<svg class="abs" style="left:369.5px;top:343.5px" width="15" height="15"><use href="#i-facetime"/></svg>
<svg class="abs" style="left:388.5px;top:343.5px" width="15" height="15"><use href="#i-music"/></svg>
<svg class="abs" style="left:408.5px;top:343.5px" width="15" height="15"><use href="#i-cal"/></svg>
<div class="abs" style="left:427.5px;top:345.500px;width:1px;height:10px;background:rgba(255,255,255,.22)"></div>
<div class="abs" style="left:433px;top:343px;width:16px;height:16px;border-radius:2.500px;background:rgba(90,125,165,.6)"><i class="d" style="left:2.500px;top:3px;background:#e8c040"></i><i class="d" style="left:6.500px;top:3px;background:#e8e0d0"></i><i class="d" style="left:10.500px;top:3px;background:#c89048"></i><i class="d" style="left:2.500px;top:7px;background:#5ac8f5"></i><i class="d" style="left:6.500px;top:7px;background:#a0d8a0"></i></div>
<svg class="abs" style="left:453.5px;top:343.5px" width="15" height="15"><use href="#i-trash"/></svg>
<div class="abs" style="left:266.25px;top:359.500px;width:1.500px;height:1.500px;border-radius:50%;background:#111"></div>
<div class="abs" style="left:356.25px;top:359.500px;width:1.500px;height:1.500px;border-radius:50%;background:#111"></div>
<div class="abs" style="left:395.25px;top:359.500px;width:1.500px;height:1.500px;border-radius:50%;background:#111"></div>
<svg class="abs" style="left:621.500px;top:345.500px" width="9" height="11" viewBox="0 0 9 11"><path d="M1.500 3l5 5-2.500 2.300V.7L6.500 3l-5 5" fill="none" stroke="#111" stroke-width="1.100"/></svg>
<svg class="abs" style="left:638.500px;top:345px" width="7" height="12" viewBox="0 0 7 12"><rect x="2.200" y="0" width="2.600" height="1.500" fill="#111"/><rect x=".7" y="1.700" width="5.600" height="9.600" rx="1" fill="none" stroke="#111" stroke-width="1.400"/></svg>
<svg class="abs" style="left:653px;top:346px" width="11" height="10" viewBox="0 0 11 10"><path d="M0 3.300h2.500L6 .5v9L2.500 6.700H0z" fill="#111"/><path d="M7.500 3a3 3 0 0 1 0 4" stroke="#111" stroke-width="1.100" fill="none"/></svg></div>
<!-- MAC-STYLE WINDOW -->
<div id="macw" class="abs" style="left:522px;top:106px;width:666px;height:360px;background:#19c0ee;overflow:hidden"><svg class="abs" style="left:0;top:0" width="666" height="360" viewBox="0 0 666 360">
<defs>
<linearGradient id="mbg" gradientUnits="userSpaceOnUse" x1="0" y1="0" x2="400" y2="300"><stop offset="0" stop-color="#00f6ff"/><stop offset=".25" stop-color="#0ad8f8"/><stop offset=".45" stop-color="#18b8f0"/><stop offset=".62" stop-color="#2492e8"/><stop offset=".8" stop-color="#3664da"/><stop offset="1" stop-color="#4040c8"/></linearGradient>
<linearGradient id="wA" gradientUnits="userSpaceOnUse" x1="0" y1="188" x2="0" y2="360"><stop offset="0.000" stop-color="#ffb47e"/><stop offset="0.058" stop-color="#ffb080"/><stop offset="0.186" stop-color="#f0a080"/><stop offset="0.326" stop-color="#e09078"/><stop offset="0.436" stop-color="#d88078"/><stop offset="0.529" stop-color="#c87078"/><stop offset="0.640" stop-color="#b86080"/><stop offset="0.756" stop-color="#b05080"/><stop offset="0.837" stop-color="#a84888"/><stop offset="0.948" stop-color="#a04088"/><stop offset="1.000" stop-color="#9c3e88"/></linearGradient>
<linearGradient id="wB" gradientUnits="userSpaceOnUse" x1="0" y1="262" x2="0" y2="360"><stop offset="0.000" stop-color="#ff8280"/><stop offset="0.061" stop-color="#ff8080"/><stop offset="0.214" stop-color="#ff7c80"/><stop offset="0.357" stop-color="#f07480"/><stop offset="0.500" stop-color="#d86878"/><stop offset="0.653" stop-color="#c06070"/><stop offset="0.796" stop-color="#a85878"/><stop offset="0.939" stop-color="#905088"/><stop offset="1.000" stop-color="#8a4c8a"/></linearGradient>
<linearGradient id="wC" gradientUnits="userSpaceOnUse" x1="0" y1="318" x2="0" y2="362"><stop offset="0.000" stop-color="#ff7488"/><stop offset="0.386" stop-color="#fa6084"/><stop offset="1.000" stop-color="#f04a7c"/></linearGradient>
<linearGradient id="mkB" gradientUnits="userSpaceOnUse" x1="25" y1="0" x2="150" y2="0"><stop offset="0" stop-color="#fff" stop-opacity="0"/><stop offset="1" stop-color="#fff" stop-opacity="1"/></linearGradient><mask id="maskB" maskUnits="userSpaceOnUse" x="-10" y="0" width="700" height="400"><rect x="-10" y="0" width="700" height="400" fill="url(#mkB)"/></mask>
<linearGradient id="mkC" gradientUnits="userSpaceOnUse" x1="165" y1="0" x2="265" y2="0"><stop offset="0" stop-color="#fff" stop-opacity="0"/><stop offset="1" stop-color="#fff" stop-opacity="1"/></linearGradient><mask id="maskC" maskUnits="userSpaceOnUse" x="-10" y="0" width="700" height="400"><rect x="-10" y="0" width="700" height="400" fill="url(#mkC)"/></mask>
<radialGradient id="wcorner" gradientUnits="userSpaceOnUse" cx="-5" cy="365" r="70"><stop offset="0" stop-color="#b83474" stop-opacity=".8"/><stop offset="1" stop-color="#b83474" stop-opacity="0"/></radialGradient>
<linearGradient id="mshape" gradientUnits="userSpaceOnUse" x1="330" y1="140" x2="680" y2="220"><stop offset="0" stop-color="#ff7882"/><stop offset="0.077" stop-color="#ff7480"/><stop offset="0.123" stop-color="#ec6278"/><stop offset="0.186" stop-color="#e05470"/><stop offset="0.357" stop-color="#d64770"/><stop offset="0.528" stop-color="#be3378"/><stop offset="0.644" stop-color="#a9288c"/><stop offset="0.729" stop-color="#8c1c90"/><stop offset="0.816" stop-color="#721898"/><stop offset="0.900" stop-color="#5c10a8"/><stop offset="0.962" stop-color="#520cac"/></linearGradient>
<radialGradient id="mtop" gradientUnits="userSpaceOnUse" cx="450" cy="-20" r="230" gradientTransform="translate(450 -20) scale(1 .8) translate(-450 20)"><stop offset="0" stop-color="#ffc4a4" stop-opacity=".7"/><stop offset=".5" stop-color="#ffb0a0" stop-opacity=".3"/><stop offset="1" stop-color="#ffb0a0" stop-opacity="0"/></radialGradient>
<radialGradient id="mtr" gradientUnits="userSpaceOnUse" cx="680" cy="-10" r="200"><stop offset="0" stop-color="#7a78b0" stop-opacity=".75"/><stop offset="1" stop-color="#7a78b0" stop-opacity="0"/></radialGradient>
<radialGradient id="mbot" gradientUnits="userSpaceOnUse" cx="345" cy="370" r="130"><stop offset="0" stop-color="#ff2a84" stop-opacity=".75"/><stop offset=".5" stop-color="#ff2a84" stop-opacity=".35"/><stop offset="1" stop-color="#ff2a84" stop-opacity="0"/></radialGradient>
<clipPath id="mclip"><rect x="0" y="0" width="666" height="360"/></clipPath>
</defs>
<g clip-path="url(#mclip)"><rect width="666" height="360" fill="url(#mbg)"/>
<path d="M424.0,-5.0C424.0,-4.2 424.3,-9.2 424.0,0.0C423.7,9.2 423.8,34.3 422.0,50.0C420.2,65.7 415.0,83.7 413.0,94.0C411.0,104.3 412.7,105.8 410.0,112.0C407.3,118.2 402.2,126.3 397.0,131.0C391.8,135.7 386.3,138.8 379.0,140.0C371.7,141.2 360.0,136.5 353.0,138.0C346.0,139.5 341.0,143.5 337.0,149.0C333.0,154.5 330.6,163.2 329.0,171.0C327.4,178.8 327.5,187.5 327.5,196.0C327.5,204.5 327.8,212.8 329.0,222.0C330.2,231.2 332.5,240.7 335.0,251.0C337.5,261.3 341.3,274.2 344.0,284.0C346.7,293.8 348.8,302.0 351.0,310.0C353.2,318.0 356.5,325.3 357.0,332.0C357.5,338.7 355.5,344.5 354.0,350.0C352.5,355.5 349.0,362.5 348.0,365.0L670,365L670,-5Z" fill="url(#mshape)"/>
<path d="M424.0,-5.0C424.0,-4.2 424.3,-9.2 424.0,0.0C423.7,9.2 423.8,34.3 422.0,50.0C420.2,65.7 415.0,83.7 413.0,94.0C411.0,104.3 412.7,105.8 410.0,112.0C407.3,118.2 402.2,126.3 397.0,131.0C391.8,135.7 386.3,138.8 379.0,140.0C371.7,141.2 360.0,136.5 353.0,138.0C346.0,139.5 341.0,143.5 337.0,149.0C333.0,154.5 330.6,163.2 329.0,171.0C327.4,178.8 327.5,187.5 327.5,196.0C327.5,204.5 327.8,212.8 329.0,222.0C330.2,231.2 332.5,240.7 335.0,251.0C337.5,261.3 341.3,274.2 344.0,284.0C346.7,293.8 348.8,302.0 351.0,310.0C353.2,318.0 356.5,325.3 357.0,332.0C357.5,338.7 355.5,344.5 354.0,350.0C352.5,355.5 349.0,362.5 348.0,365.0L670,365L670,-5Z" fill="url(#mtop)"/>
<path d="M424.0,-5.0C424.0,-4.2 424.3,-9.2 424.0,0.0C423.7,9.2 423.8,34.3 422.0,50.0C420.2,65.7 415.0,83.7 413.0,94.0C411.0,104.3 412.7,105.8 410.0,112.0C407.3,118.2 402.2,126.3 397.0,131.0C391.8,135.7 386.3,138.8 379.0,140.0C371.7,141.2 360.0,136.5 353.0,138.0C346.0,139.5 341.0,143.5 337.0,149.0C333.0,154.5 330.6,163.2 329.0,171.0C327.4,178.8 327.5,187.5 327.5,196.0C327.5,204.5 327.8,212.8 329.0,222.0C330.2,231.2 332.5,240.7 335.0,251.0C337.5,261.3 341.3,274.2 344.0,284.0C346.7,293.8 348.8,302.0 351.0,310.0C353.2,318.0 356.5,325.3 357.0,332.0C357.5,338.7 355.5,344.5 354.0,350.0C352.5,355.5 349.0,362.5 348.0,365.0L670,365L670,-5Z" fill="url(#mbot)"/>
<path d="M424.0,-5.0C424.0,-4.2 424.3,-9.2 424.0,0.0C423.7,9.2 423.8,34.3 422.0,50.0C420.2,65.7 415.0,83.7 413.0,94.0C411.0,104.3 412.7,105.8 410.0,112.0C407.3,118.2 402.2,126.3 397.0,131.0C391.8,135.7 386.3,138.8 379.0,140.0C371.7,141.2 360.0,136.5 353.0,138.0C346.0,139.5 341.0,143.5 337.0,149.0C333.0,154.5 330.6,163.2 329.0,171.0C327.4,178.8 327.5,187.5 327.5,196.0C327.5,204.5 327.8,212.8 329.0,222.0C330.2,231.2 332.5,240.7 335.0,251.0C337.5,261.3 341.3,274.2 344.0,284.0C346.7,293.8 348.8,302.0 351.0,310.0C353.2,318.0 356.5,325.3 357.0,332.0C357.5,338.7 355.5,344.5 354.0,350.0C352.5,355.5 349.0,362.5 348.0,365.0L670,365L670,-5Z" fill="url(#mtr)"/>
<path d="M450.0,0.8C450.0,1.7 450.4,-3.5 450.0,6.0C449.6,15.5 449.8,41.7 447.8,58.0C445.7,74.3 439.9,93.0 437.7,103.8C435.4,114.5 437.3,116.1 434.3,122.5C431.3,128.9 425.5,137.4 419.8,142.2C414.0,147.1 407.8,150.4 399.6,151.6C391.4,152.8 378.3,148.0 370.5,149.5C362.6,151.1 357.0,155.2 352.6,161.0C348.1,166.7 345.4,175.7 343.6,183.8C341.8,192.0 341.9,201.0 341.9,209.8C341.9,218.7 342.2,227.3 343.6,236.9C345.0,246.4 347.5,256.3 350.3,267.0C353.1,277.8 357.4,291.1 360.4,301.4C363.4,311.6 365.8,320.1 368.2,328.4C370.7,336.7 374.4,344.3 375.0,351.3C375.5,358.2 373.3,364.3 371.6,370.0C369.9,375.7 366.0,383.0 364.9,385.6L700,420L700,-40Z" fill="#3a0070" opacity=".008"/>
<path d="M472.0,6.6C472.0,7.5 472.4,2.1 472.0,12.0C471.6,21.9 471.8,49.1 469.5,66.0C467.2,82.9 460.8,102.4 458.4,113.5C455.9,124.7 457.9,126.3 454.6,133.0C451.3,139.6 444.9,148.4 438.5,153.5C432.1,158.5 425.3,161.9 416.2,163.2C407.1,164.5 392.6,159.4 384.0,161.0C375.3,162.7 369.1,167.0 364.1,172.9C359.2,178.9 356.2,188.2 354.2,196.7C352.2,205.1 352.3,214.5 352.3,223.7C352.3,232.9 352.6,241.9 354.2,251.8C355.8,261.7 358.5,271.9 361.6,283.1C364.7,294.2 369.5,308.1 372.8,318.7C376.1,329.3 378.8,338.2 381.5,346.8C384.2,355.4 388.3,363.4 388.9,370.6C389.5,377.8 387.1,384.1 385.2,390.0C383.3,395.9 379.0,403.5 377.8,406.2L700,420L700,-40Z" fill="#3a0070" opacity=".008"/>
<path d="M494.0,12.4C494.0,13.3 494.5,7.7 494.0,18.0C493.5,28.3 493.8,56.5 491.3,74.0C488.8,91.5 481.8,111.7 479.0,123.3C476.3,134.9 478.6,136.5 475.0,143.4C471.3,150.3 464.3,159.5 457.3,164.7C450.3,169.9 442.8,173.5 432.8,174.8C422.8,176.1 407.0,170.9 397.4,172.6C387.9,174.2 381.1,178.7 375.7,184.9C370.2,191.0 367.0,200.7 364.8,209.5C362.6,218.3 362.8,228.0 362.8,237.5C362.8,247.0 363.1,256.4 364.8,266.6C366.5,276.9 369.6,287.5 373.0,299.1C376.4,310.7 381.6,325.1 385.2,336.1C388.8,347.1 391.8,356.2 394.7,365.2C397.7,374.2 402.2,382.4 402.9,389.8C403.6,397.3 400.8,403.8 398.8,410.0C396.8,416.2 392.0,424.0 390.6,426.8L700,420L700,-40Z" fill="#3a0070" opacity=".008"/>
<path d="M516.0,18.2C516.0,19.2 516.5,13.4 516.0,24.0C515.5,34.6 515.8,63.8 513.0,82.0C510.3,100.2 502.7,121.1 499.7,133.0C496.8,145.0 499.2,146.8 495.3,153.9C491.3,161.1 483.7,170.5 476.0,176.0C468.4,181.4 460.3,185.0 449.4,186.4C438.5,187.8 421.3,182.3 410.9,184.1C400.6,185.8 393.2,190.5 387.2,196.8C381.3,203.2 377.7,213.3 375.4,222.4C373.1,231.4 373.2,241.5 373.2,251.4C373.2,261.2 373.5,270.9 375.4,281.5C377.2,292.2 380.6,303.2 384.3,315.2C388.0,327.1 393.7,342.0 397.6,353.4C401.5,364.8 404.8,374.3 408.0,383.6C411.2,392.9 416.1,401.4 416.8,409.1C417.6,416.9 414.6,423.6 412.4,430.0C410.2,436.4 405.0,444.5 403.5,447.4L700,420L700,-40Z" fill="#3a0070" opacity=".008"/>
<path d="M538.0,24.0C538.0,25.0 538.5,19.0 538.0,30.0C537.5,41.0 537.7,71.2 534.8,90.0C531.9,108.8 523.6,130.4 520.4,142.8C517.2,155.2 519.9,157.0 515.6,164.4C511.3,171.8 503.1,181.6 494.8,187.2C486.5,192.8 477.7,196.6 466.0,198.0C454.3,199.4 435.6,193.8 424.4,195.6C413.2,197.4 405.2,202.2 398.8,208.8C392.4,215.4 388.5,225.8 386.0,235.2C383.5,244.6 383.6,255.0 383.6,265.2C383.6,275.4 384.0,285.4 386.0,296.4C388.0,307.4 391.6,318.8 395.6,331.2C399.6,343.6 405.7,359.0 410.0,370.8C414.3,382.6 417.7,392.4 421.2,402.0C424.7,411.6 430.0,420.4 430.8,428.4C431.6,436.4 428.4,443.4 426.0,450.0C423.6,456.6 418.0,465.0 416.4,468.0L700,420L700,-40Z" fill="#3a0070" opacity=".008"/>
<path d="M560.0,29.8C560.0,30.8 560.6,24.6 560.0,36.0C559.4,47.4 559.7,78.6 556.6,98.0C553.4,117.4 544.5,139.7 541.1,152.6C537.6,165.4 540.5,167.2 535.9,174.9C531.3,182.5 522.4,192.7 513.6,198.4C504.7,204.2 495.2,208.2 482.6,209.6C470.0,211.0 449.9,205.3 437.9,207.1C425.8,209.0 417.2,213.9 410.4,220.8C403.5,227.6 399.3,238.3 396.6,248.0C393.9,257.8 394.0,268.5 394.0,279.0C394.0,289.6 394.5,299.9 396.6,311.3C398.8,322.6 402.6,334.4 406.9,347.2C411.2,360.1 417.8,376.0 422.4,388.2C427.0,400.4 430.7,410.5 434.4,420.4C438.2,430.3 443.9,439.4 444.8,447.7C445.6,455.9 442.2,463.2 439.6,470.0C437.0,476.8 431.0,485.5 429.3,488.6L700,420L700,-40Z" fill="#3a0070" opacity=".008"/>
<path d="M582.0,35.6C582.0,36.7 582.6,30.3 582.0,42.0C581.4,53.7 581.7,85.9 578.3,106.0C574.9,126.1 565.4,149.1 561.8,162.3C558.1,175.5 561.1,177.5 556.2,185.4C551.3,193.3 541.8,203.7 532.3,209.7C522.8,215.7 512.7,219.7 499.2,221.2C485.7,222.7 464.2,216.7 451.4,218.6C438.5,220.6 429.3,225.7 421.9,232.7C414.6,239.8 410.1,250.9 407.2,260.9C404.3,270.9 404.4,282.0 404.4,292.9C404.4,303.8 404.9,314.4 407.2,326.2C409.5,337.9 413.6,350.1 418.2,363.3C422.8,376.5 429.9,392.9 434.8,405.5C439.7,418.1 443.7,428.6 447.7,438.8C451.7,449.0 457.8,458.4 458.7,467.0C459.6,475.5 456.0,483.0 453.2,490.0C450.4,497.0 444.0,506.0 442.2,509.2L700,420L700,-40Z" fill="#3a0070" opacity=".008"/>
<path d="M604.0,41.4C604.0,42.5 604.7,35.9 604.0,48.0C603.3,60.1 603.7,93.3 600.1,114.0C596.5,134.7 586.4,158.4 582.4,172.1C578.5,185.7 581.8,187.7 576.6,195.8C571.3,204.0 561.2,214.8 551.1,220.9C541.0,227.1 530.2,231.3 515.8,232.8C501.4,234.3 478.6,228.2 464.8,230.2C451.1,232.1 441.3,237.4 433.5,244.7C425.6,251.9 420.9,263.4 417.8,273.7C414.7,284.1 414.9,295.5 414.9,306.7C414.9,317.9 415.4,328.9 417.8,341.0C420.2,353.1 424.7,365.7 429.6,379.3C434.5,393.0 442.0,409.9 447.2,422.9C452.4,435.9 456.7,446.6 460.9,457.2C465.2,467.8 471.7,477.4 472.7,486.2C473.7,495.0 469.7,502.7 466.8,510.0C463.9,517.3 457.0,526.5 455.0,529.8L700,420L700,-40Z" fill="#3a0070" opacity=".008"/>
<path d="M-5.0,187.0C-4.2,187.2 -3.8,187.5 0.0,188.0C3.8,188.5 10.8,188.0 18.0,190.0C25.2,192.0 34.7,195.8 43.0,200.0C51.3,204.2 59.7,209.7 68.0,215.0C76.3,220.3 84.7,225.8 93.0,231.6C101.3,237.4 109.7,244.4 118.0,250.0C126.3,255.6 134.3,260.0 142.6,265.0C150.9,270.0 159.3,274.6 167.6,280.0C175.9,285.4 184.3,292.2 192.5,297.7C200.7,303.1 208.8,308.1 217.0,312.7C225.2,317.2 233.7,321.4 242.0,325.0C250.3,328.6 259.0,330.3 267.0,334.0C275.0,337.7 282.2,342.5 290.0,347.0C297.8,351.5 310.0,358.7 314.0,361.0L314,365L-5,365Z" fill="url(#wA)"/>
<path d="M-5.0,187.0C-4.2,187.2 -3.8,187.5 0.0,188.0C3.8,188.5 10.8,188.0 18.0,190.0C25.2,192.0 34.7,195.8 43.0,200.0C51.3,204.2 59.7,209.7 68.0,215.0C76.3,220.3 84.7,225.8 93.0,231.6C101.3,237.4 109.7,244.4 118.0,250.0C126.3,255.6 134.3,260.0 142.6,265.0C150.9,270.0 159.3,274.6 167.6,280.0C175.9,285.4 184.3,292.2 192.5,297.7C200.7,303.1 208.8,308.1 217.0,312.7C225.2,317.2 233.7,321.4 242.0,325.0C250.3,328.6 259.0,330.3 267.0,334.0C275.0,337.7 282.2,342.5 290.0,347.0C297.8,351.5 310.0,358.7 314.0,361.0L314,365L-5,365Z" fill="url(#wB)" mask="url(#maskB)"/>
<path d="M-5.0,187.0C-4.2,187.2 -3.8,187.5 0.0,188.0C3.8,188.5 10.8,188.0 18.0,190.0C25.2,192.0 34.7,195.8 43.0,200.0C51.3,204.2 59.7,209.7 68.0,215.0C76.3,220.3 84.7,225.8 93.0,231.6C101.3,237.4 109.7,244.4 118.0,250.0C126.3,255.6 134.3,260.0 142.6,265.0C150.9,270.0 159.3,274.6 167.6,280.0C175.9,285.4 184.3,292.2 192.5,297.7C200.7,303.1 208.8,308.1 217.0,312.7C225.2,317.2 233.7,321.4 242.0,325.0C250.3,328.6 259.0,330.3 267.0,334.0C275.0,337.7 282.2,342.5 290.0,347.0C297.8,351.5 310.0,358.7 314.0,361.0L314,365L-5,365Z" fill="url(#wC)" mask="url(#maskC)"/>
<path d="M-5.0,187.0C-4.2,187.2 -3.8,187.5 0.0,188.0C3.8,188.5 10.8,188.0 18.0,190.0C25.2,192.0 34.7,195.8 43.0,200.0C51.3,204.2 59.7,209.7 68.0,215.0C76.3,220.3 84.7,225.8 93.0,231.6C101.3,237.4 109.7,244.4 118.0,250.0C126.3,255.6 134.3,260.0 142.6,265.0C150.9,270.0 159.3,274.6 167.6,280.0C175.9,285.4 184.3,292.2 192.5,297.7C200.7,303.1 208.8,308.1 217.0,312.7C225.2,317.2 233.7,321.4 242.0,325.0C250.3,328.6 259.0,330.3 267.0,334.0C275.0,337.7 282.2,342.5 290.0,347.0C297.8,351.5 310.0,358.7 314.0,361.0L314,365L-5,365Z" fill="url(#wcorner)"/>
<path d="M-11.0,202.9C-10.2,203.1 -9.8,203.4 -6.0,204.0C-2.2,204.6 4.8,204.2 12.0,206.4C19.2,208.5 28.7,212.5 37.0,216.9C45.3,221.2 53.7,226.9 62.0,232.4C70.3,237.8 78.7,243.5 87.0,249.5C95.3,255.5 103.7,262.6 112.0,268.4C120.3,274.1 128.3,278.7 136.6,283.9C144.9,289.0 153.3,293.7 161.6,299.4C169.9,305.0 178.3,311.9 186.5,317.6C194.7,323.2 202.8,328.3 211.0,333.0C219.2,337.8 227.7,342.1 236.0,345.8C244.3,349.6 253.0,351.5 261.0,355.3C269.0,359.2 276.2,364.1 284.0,368.8C291.8,373.5 304.0,380.9 308.0,383.3L314,400L-60,400Z" fill="#5a2080" opacity=".012"/>
<path d="M-17.0,218.8C-16.2,219.0 -15.8,219.3 -12.0,220.0C-8.2,220.7 -1.2,220.4 6.0,222.7C13.2,225.0 22.7,229.2 31.0,233.7C39.3,238.2 47.7,244.1 56.0,249.7C64.3,255.3 72.7,261.2 81.0,267.3C89.3,273.5 97.7,280.8 106.0,286.7C114.3,292.6 122.3,297.4 130.6,302.7C138.9,308.0 147.3,312.9 155.6,318.7C163.9,324.5 172.3,331.6 180.5,337.4C188.7,343.2 196.8,348.5 205.0,353.4C213.2,358.3 221.7,362.8 230.0,366.7C238.3,370.6 247.0,372.7 255.0,376.7C263.0,380.7 270.2,385.8 278.0,390.6C285.8,395.4 298.0,403.1 302.0,405.6L314,400L-60,400Z" fill="#5a2080" opacity=".012"/>
<path d="M-23.0,234.7C-22.2,234.9 -21.8,235.3 -18.0,236.0C-14.2,236.7 -7.2,236.7 0.0,239.1C7.2,241.5 16.7,245.9 25.0,250.6C33.3,255.2 41.7,261.3 50.0,267.1C58.3,272.8 66.7,278.8 75.0,285.2C83.3,291.5 91.7,299.0 100.0,305.1C108.3,311.1 116.3,316.1 124.6,321.6C132.9,327.1 141.3,332.1 149.6,338.1C157.9,344.0 166.3,351.3 174.5,357.2C182.7,363.2 190.8,368.7 199.0,373.7C207.2,378.8 215.7,383.5 224.0,387.5C232.3,391.6 241.0,393.9 249.0,398.0C257.0,402.2 264.2,407.4 272.0,412.4C279.8,417.4 292.0,425.3 296.0,427.8L314,400L-60,400Z" fill="#5a2080" opacity=".012"/>
<path d="M-29.0,250.6C-28.2,250.8 -27.8,251.2 -24.0,252.0C-20.2,252.8 -13.2,252.9 -6.0,255.4C1.2,258.0 10.7,262.6 19.0,267.4C27.3,272.3 35.7,278.5 44.0,284.4C52.3,290.4 60.7,296.5 69.0,303.0C77.3,309.5 85.7,317.2 94.0,323.4C102.3,329.7 110.3,334.7 118.6,340.4C126.9,346.1 135.3,351.3 143.6,357.4C151.9,363.5 160.3,371.0 168.5,377.1C176.7,383.2 184.8,388.9 193.0,394.1C201.2,399.3 209.7,404.1 218.0,408.4C226.3,412.6 235.0,415.1 243.0,419.4C251.0,423.7 258.2,429.1 266.0,434.2C273.8,439.3 286.0,447.5 290.0,450.1L314,400L-60,400Z" fill="#5a2080" opacity=".012"/>
<path d="M-35.0,266.5C-34.2,266.8 -33.8,267.1 -30.0,268.0C-26.2,268.9 -19.2,269.1 -12.0,271.8C-4.8,274.5 4.7,279.3 13.0,284.3C21.3,289.3 29.7,295.7 38.0,301.8C46.3,307.9 54.7,314.2 63.0,320.9C71.3,327.6 79.7,335.4 88.0,341.8C96.3,348.2 104.3,353.4 112.6,359.3C120.9,365.1 129.3,370.5 137.6,376.8C145.9,383.0 154.3,390.7 162.5,396.9C170.7,403.2 178.8,409.0 187.0,414.4C195.2,419.8 203.7,424.8 212.0,429.2C220.3,433.6 229.0,436.2 237.0,440.7C245.0,445.2 252.2,450.7 260.0,456.0C267.8,461.3 280.0,469.7 284.0,472.4L314,400L-60,400Z" fill="#5a2080" opacity=".012"/>
<path d="M-41.0,282.4C-40.2,282.7 -39.8,283.0 -36.0,284.0C-32.2,285.0 -25.2,285.3 -18.0,288.2C-10.8,291.0 -1.3,296.0 7.0,301.2C15.3,306.3 23.7,312.9 32.0,319.2C40.3,325.4 48.7,331.9 57.0,338.8C65.3,345.6 73.7,353.6 82.0,360.2C90.3,366.7 98.3,372.1 106.6,378.1C114.9,384.1 123.3,389.7 131.6,396.1C139.9,402.6 148.3,410.4 156.5,416.8C164.7,423.2 172.8,429.2 181.0,434.7C189.2,440.3 197.7,445.5 206.0,450.0C214.3,454.6 223.0,457.4 231.0,462.0C239.0,466.7 246.2,472.4 254.0,477.8C261.8,483.2 274.0,491.9 278.0,494.7L314,400L-60,400Z" fill="#5a2080" opacity=".012"/>
</g></svg>
<div class="abs" style="left:0;top:0;width:666px;height:12px;background:linear-gradient(90deg,#10f4ff 0,#18f0fc 35%,#22e0f8 58%,#38d8f4 62.500%,#f6beb0 64.800%,#f2aaa6 70%,#e49cac 78.500%,#c88cb8 89%,#aa7ec4 100%)"></div>
<svg class="abs" style="left:4px;top:2px" width="9" height="9"><use href="#i-flutter"/></svg>
<div class="abs t" style="left:15px;top:1px;height:12px;line-height:12px;font-size:5.800px;color:#fff">Flutter-MacOS</div>
<svg class="abs" style="left:464px;top:3px" width="6.500" height="6.500" viewBox="0 0 16 16"><path d="M8 1.500c-2.800 0-4.500 2-4.500 4.800 0 2.500-.5 4-2 5.200h13c-1.500-1.200-2-2.700-2-5.200 0-2.800-1.700-4.800-4.500-4.800zM6 13a2 2 0 0 0 4 0z" fill="#fff"/></svg>
<svg class="abs" style="left:480px;top:3px" width="6.500" height="6.500" viewBox="0 0 16 16"><path d="M2 14L13 3M9.500 1.500l5 5M2 2l4 4M10 10l4.500 4.500" stroke="#fff" stroke-width="2.200" fill="none"/></svg>
<svg class="abs" style="left:495px;top:3px" width="6.500" height="6.500" viewBox="0 0 16 16"><path d="M3.500 1.500h9M5.500 1.500v6L3 10h10l-2.500-2.500v-6M8 10v5" stroke="#fff" stroke-width="2" fill="none"/></svg>
<svg class="abs" style="left:511px;top:3px" width="6.500" height="6.500" viewBox="0 0 16 16"><circle cx="8" cy="8" r="4.200" fill="none" stroke="#fff" stroke-width="3.400"/><path d="M8 0v16M0 8h16M2.300 2.300l11.400 11.400M13.700 2.300L2.300 13.700" stroke="#fff" stroke-width="2.200"/><circle cx="8" cy="8" r="2" fill="#d08aa0"/></svg>
<div class="abs t" style="left:527.500px;top:.7px;height:12px;line-height:12px;font-size:6px;color:#fff;letter-spacing:-.1px">8月01日 周五 21:34:55</div>
<svg class="abs" style="left:598px;top:1.700px" width="9.500" height="9.500" viewBox="0 0 20 20"><circle cx="10" cy="10" r="10" fill="#c8d8a8"/><path d="M4 20c0-5 2-8 6-8s6 3 6 8z" fill="#f0f0e8"/><circle cx="10" cy="8" r="3.500" fill="#f5d5c0"/><path d="M5.500 9C5 4 8 3 10 3s5 1 4.500 6c-.5 3 1 4 1 6-2 0-3-2-3-5-1-1.500-3-2-4-2-.5 2 0 5-3 7 0-2 .500-3 0-6z" fill="#d9a860"/></svg>
<svg class="abs" style="left:618px;top:3px" width="7.500" height="7.500" viewBox="0 0 16 16"><path d="M2 8h12" stroke="#fff" stroke-width="1.300" opacity=".9"/></svg>
<svg class="abs" style="left:635px;top:3px" width="7.500" height="7.500" viewBox="0 0 16 16"><path d="M2.500 5h9v9h-9zM5 5V2.500h9V11h-2.500" stroke="#fff" stroke-width="1.500" fill="none" opacity=".9"/></svg>
<svg class="abs" style="left:653px;top:3px" width="7.500" height="7.500" viewBox="0 0 16 16"><path d="M2.500 2.500l11 11M13.500 2.500l-11 11" stroke="#fff" stroke-width="1.500" opacity=".95"/></svg>
<div class="abs t" style="left:76.500px;top:22px;font-size:18.200px;line-height:22px;font-weight:bold;color:#fff;letter-spacing:-.2px">21:34:55</div>
<div class="abs t" style="left:77px;top:45.500px;font-size:8px;line-height:12px;color:#fff">2025年8月01日 星期五</div>
<svg class="abs" style="left:76px;top:65px" width="17" height="17" viewBox="0 0 24 24"><circle cx="12" cy="12" r="5.200" fill="#fff"/><g stroke="#fff" stroke-width="1.800" stroke-linecap="round"><path d="M19.20 12.00L22.50 12.00"/><path d="M17.09 17.09L19.42 19.42"/><path d="M12.00 19.20L12.00 22.50"/><path d="M6.91 17.09L4.58 19.42"/><path d="M4.80 12.00L1.50 12.00"/><path d="M6.91 6.91L4.58 4.58"/><path d="M12.00 4.80L12.00 1.50"/><path d="M17.09 6.91L19.42 4.58"/></g></svg>
<div class="abs t" style="left:77px;top:84px;font-size:6.800px;line-height:10px;color:#fff">雾霾转晴 37℃</div>
<div class="abs" style="left:77px;top:110px;width:73px;height:29px;border-radius:5px;background:#fff"></div>
<svg class="abs" style="left:78px;top:112px" width="24" height="24"><use href="#i-whale"/></svg>
<div class="abs t" style="left:101.500px;top:117px;font-size:10.500px;line-height:16px;font-weight:bold;color:#4d6bfe;letter-spacing:-.45px">deepseek</div>
<svg class="abs" style="left:166px;top:110px" width="28" height="28"><use href="#i-flutter"/></svg>
<div class="abs t lab" style="left:149px;top:140px;width:60px">Flutter</div>
<svg class="abs" style="left:208.7px;top:110px" width="29.5" height="29.5"><use href="#i-dart"/></svg>
<div class="abs t lab" style="left:193px;top:140px;width:60px">Dart中...</div>
<div class="abs" style="left:252px;top:110px;width:29.500px;height:29.500px;border-radius:5px;background:#3cc84a"></div>
<svg class="abs" style="left:254px;top:112px" width="25.5" height="25.5"><use href="#i-wechat"/></svg>
<div class="abs t lab" style="left:237px;top:140px;width:60px">微信</div>
<div class="abs" style="left:208.500px;top:22px;width:73px;height:73px;border-radius:6px;background:#fff;overflow:hidden"><div style="height:22px;background:#fd5c5c;color:#fff;font-size:8px;line-height:24px;text-align:center">2025年8月</div><div style="text-align:center;font-size:21px;line-height:24px;color:#1c1c1c;margin-top:3px;letter-spacing:-.3px">01</div><div style="text-align:center;font-size:5.800px;line-height:8px;color:#9a9a9a;margin-top:1px">第186天 第27周</div><div style="text-align:center;font-size:6.800px;line-height:9px;color:#333;margin-top:1px">六月初六</div></div>
<div class="abs t lab" style="left:215px;top:95.700px;width:60px">日历</div>
<div class="abs" style="left:296px;top:22px;width:117px;height:73px;border-radius:6px;background:#e1f3fc;overflow:hidden">
<div class="abs t" style="left:5px;top:4px;font-size:14.500px;line-height:18px;color:#1c1c1c;letter-spacing:-.3px">01</div><div class="abs t" style="left:24px;top:9px;font-size:5.800px;line-height:8px;color:#f0443c">星期五</div>
<div class="abs" style="left:5px;top:25.700px;width:107px;height:22.500px;background:#c9ecd9;border-left:1.500px solid #86d89c"><div class="abs t" style="left:2.500px;top:3.300px;font-size:6.300px;line-height:7px;color:#8a9a92">08:30-10:00</div><div class="abs t" style="left:2.500px;top:11.800px;font-size:6.800px;line-height:9px;color:#222">向CTO汇报项目进度</div><div class="abs t" style="right:3px;top:1px;font-size:7px;line-height:8px;color:#777">×</div></div>
<div class="abs" style="left:5px;top:50px;width:107px;height:22.500px;background:#ebe8c3;border-left:1.500px solid #f3c343"><div class="abs t" style="left:2.500px;top:3.300px;font-size:6.300px;line-height:7px;color:#9a9a86">10:00-10:30</div><div class="abs t" style="left:2.500px;top:11.800px;font-size:6.800px;line-height:9px;color:#222">和张工确认下期预算</div><div class="abs t" style="right:3px;top:1px;font-size:7px;line-height:8px;color:#777">×</div></div>
</div>
<div class="abs t lab" style="left:324.500px;top:95.700px;width:60px">便签</div>
<div class="abs" style="left:428px;top:22px;width:73px;height:73px;border-radius:6px;background:#fff;overflow:hidden"><div style="height:22px;background:#fec20e;color:#fff;font-size:8px;line-height:24px;text-align:center">备忘录</div>
<div class="abs t" style="left:5px;top:27.500px;font-size:6.800px;line-height:9px;color:#222;font-weight:bold">鼓浪屿沙滩</div>
<svg class="abs" style="left:40.500px;top:27.500px" width="8.500" height="8.500" viewBox="0 0 10 10"><rect width="10" height="10" rx="1.500" fill="#3aa0e8"/><path d="M0 6.500h10V10H0z" fill="#f2c35a"/><path d="M3 2h4L5 6z" fill="#e8483c"/><circle cx="8" cy="2" r="1.200" fill="#ffe24a"/></svg>
<svg class="abs" style="left:5.500px;top:39px" width="6.500" height="6.500" viewBox="0 0 10 10"><rect width="10" height="10" rx="2" fill="#dfeaf3"/><path d="M1 7c2-5 6-5 7-2-2-1-3 0-3 1.500 1 1.500 3 .5 4 .5v2H1z" fill="#3a8ad8"/></svg>
<div class="abs t" style="left:12.500px;top:38px;font-size:5.800px;line-height:8.600px;color:#9a9a9a">我常这样漫步海边，</div><div class="abs t" style="left:5px;top:46.600px;font-size:5.800px;line-height:8.600px;color:#9a9a9a">体味海的气息，海的...</div>
<div class="abs t" style="left:5px;top:60.500px;font-size:6.300px;line-height:8px;color:#9a9a9a">18:00</div></div>
<div class="abs t lab" style="left:434.500px;top:95.700px;width:60px">备忘录</div>
<div class="abs" style="left:516px;top:22px;width:73px;height:73px;border-radius:6px;overflow:hidden;background:#3a7ad0">
<svg class="abs" style="left:0;top:0" width="73.500" height="73" viewBox="0 0 73.500 73"><defs><linearGradient id="sky" x1="0" y1="0" x2="0" y2="1"><stop offset="0" stop-color="#0a3c98"/><stop offset=".3" stop-color="#1f62c2"/><stop offset=".55" stop-color="#5f9ce0"/><stop offset=".72" stop-color="#a9c9ee"/><stop offset=".8" stop-color="#dfe8f2"/></linearGradient></defs>
<rect width="73.500" height="73" fill="url(#sky)"/>
<rect x="0" y="62" width="73.500" height="11" fill="#c4c0b8"/><rect x="0" y="59.500" width="73.500" height="3" fill="#8a6a5c"/>
<path d="M0 47.500h14l2 2.300H0z" fill="#d6812e"/><rect x="0" y="49.800" width="15" height="2.200" fill="#93401f"/><path d="M0 52h19.500l2.500 2.500H0z" fill="#dd8a34"/><rect x="0" y="54.500" width="21" height="5.500" fill="#b9452b"/><rect x="0" y="56.500" width="21" height="1" fill="#8e3220"/>
<rect x="21" y="55.500" width="52.500" height="3" fill="#6c8a5a" opacity=".85"/><rect x="24" y="57.800" width="49.500" height="2.400" fill="#b04c3c" opacity=".8"/><rect x="21" y="54.500" width="52.500" height="1.300" fill="#dfe6ee" opacity=".7"/>
<rect x="53.300" y="12" width=".9" height="50" fill="#ececec" opacity=".85"/><path d="M54.200 12.500c2.500.3 4.500 1.300 8 3.300l-1.200 4.700c-2.800-1.400-5-2.300-6.800-2.700z" fill="#e0201c"/><circle cx="56.200" cy="14.800" r=".7" fill="#ffd93a"/>
</svg>
<div class="abs t" style="left:0;top:5.500px;width:73.500px;text-align:center;font-size:7.300px;line-height:10px;color:#fff">距离『国庆节』</div>
<div class="abs t" style="left:0;top:27.200px;width:73.500px;text-align:center;font-size:7.500px;line-height:20px;color:#fff">还剩 <span style="font-size:15.500px;font-weight:bold;font-family:'Liberation Sans',sans-serif;vertical-align:-1.500px">60</span> 天</div>
<div class="abs t" style="left:0;top:60px;width:73.500px;text-align:center;font-size:6px;line-height:8px;color:#fff">2025-10-01 00:00:00</div>
</div>
<div class="abs t lab" style="left:522.500px;top:95.700px;width:60px">倒计时</div>
<div class="abs" style="left:153px;top:216px;width:117.500px;height:112px;border-radius:8px;background:linear-gradient(208deg,rgba(255,255,255,0) 50%,rgba(240,164,200,.9) 74%,rgba(250,150,180,1) 100%),linear-gradient(100deg,#2ed6f2 0%,#3cb6ee 50%,#4c8ee6 100%);box-shadow:0 0 0 .5px rgba(255,255,255,.18)"></div>
<svg class="abs" style="left:166.5px;top:222px" width="17" height="17"><use href="#i-flutter"/></svg>
<svg class="abs" style="left:199.5px;top:218px" width="24.5" height="24.5"><use href="#i-whale"/></svg>
<svg class="abs" style="left:239px;top:221.5px" width="19" height="19"><use href="#i-yuanbao"/></svg>
<div class="abs t lab2" style="left:145.5px;top:242.500px;width:60px">Flutter3.32</div>
<div class="abs t lab2" style="left:182px;top:242.500px;width:60px">DeepSeek</div>
<div class="abs t lab2" style="left:218.5px;top:242.500px;width:60px">腾讯元宝</div>
<svg class="abs" style="left:165.4px;top:255.5px" width="19.5" height="19.5"><use href="#i-doubao-c"/></svg>
<svg class="abs" style="left:202px;top:255.2px" width="19.5" height="19.5"><use href="#i-tongyi"/></svg>
<div class="abs t lab2" style="left:145.5px;top:277.500px;width:60px">豆包</div>
<div class="abs t lab2" style="left:182px;top:277.500px;width:60px">通义千问</div>
<div class="abs" style="left:313px;top:319px;width:4px;height:4px;border-radius:50%;background:rgba(255,255,255,1)"></div>
<div class="abs" style="left:322px;top:319px;width:4px;height:4px;border-radius:50%;background:rgba(255,255,255,0.4)"></div>
<div class="abs" style="left:330.8px;top:319px;width:4px;height:4px;border-radius:50%;background:rgba(255,255,255,0.4)"></div>
<div class="abs" style="left:339.5px;top:319px;width:4px;height:4px;border-radius:50%;background:rgba(255,255,255,0.4)"></div>
<div class="abs" style="left:348.3px;top:319px;width:4px;height:4px;border-radius:50%;background:rgba(255,255,255,0.4)"></div>
<div class="abs" style="left:155px;top:333px;width:356px;height:22px;border-radius:4.500px;background:linear-gradient(90deg,#e892b0 0,#ec8cac 26%,#e080b4 31%,#8070d8 37%,#6468dc 44%,#6a60d8 51%,#f0449c 56%,#e62ca2 69%,#c41eac 86%,#a218b4 100%)"></div>
<svg class="abs" style="left:161.0px;top:337px" width="14" height="14"><use href="#i-flutter"/></svg>
<svg class="abs" style="left:180.0px;top:337px" width="14" height="14"><use href="#i-appstore"/></svg>
<div class="abs" style="left:199px;top:336px;width:16px;height:16px;border-radius:3.500px;background:rgba(120,110,140,.45)"><i class="d" style="left:2.500px;top:3px;background:#6ccbf9"></i><i class="d" style="left:6.500px;top:3px;background:#5b6bf5"></i><i class="d" style="left:10.500px;top:2.500px;background:#4fd89a;border-radius:50%"></i><i class="d" style="left:2.500px;top:7px;background:#dfe4f5"></i><i class="d" style="left:6.500px;top:7px;background:#7a6bf5"></i></div>
<svg class="abs" style="left:219.0px;top:337px" width="14" height="14"><use href="#i-safari"/></svg>
<svg class="abs" style="left:239.0px;top:337px" width="14" height="14"><use href="#i-messages"/></svg>
<div class="abs" style="left:258.5px;top:338.500px;width:1px;height:10px;background:rgba(255,255,255,.2)"></div>
<svg class="abs" style="left:264.0px;top:337px" width="14" height="14"><use href="#i-launch"/></svg>
<svg class="abs" style="left:284.0px;top:337px" width="14" height="14"><use href="#i-home"/></svg>
<svg class="abs" style="left:303.0px;top:337px" width="14" height="14"><use href="#i-info"/></svg>
<div class="abs" style="left:322.5px;top:338.500px;width:1px;height:10px;background:rgba(255,255,255,.2)"></div>
<svg class="abs" style="left:329.0px;top:337px" width="14" height="14"><use href="#i-contacts"/></svg>
<svg class="abs" style="left:348.0px;top:337px" width="14" height="14"><use href="#i-mail"/></svg>
<svg class="abs" style="left:368.0px;top:337px" width="14" height="14"><use href="#i-maps"/></svg>
<svg class="abs" style="left:387.0px;top:337px" width="14" height="14"><use href="#i-photos"/></svg>
<svg class="abs" style="left:407.0px;top:337px" width="14" height="14"><use href="#i-facetime"/></svg>
<svg class="abs" style="left:426.0px;top:337px" width="14" height="14"><use href="#i-music"/></svg>
<svg class="abs" style="left:446.0px;top:337px" width="14" height="14"><use href="#i-cal"/></svg>
<div class="abs" style="left:464.5px;top:338.500px;width:1px;height:10px;background:rgba(255,255,255,.2)"></div>
<div class="abs" style="left:469px;top:336px;width:16px;height:16px;border-radius:3.500px;background:rgba(110,30,120,.45)"><i class="d" style="left:2.500px;top:3px;background:#f5d04a"></i><i class="d" style="left:6.500px;top:3px;background:#f2f2f2"></i><i class="d" style="left:10.500px;top:3px;background:#7a8a9a"></i><i class="d" style="left:2.500px;top:7px;background:#e8c040"></i><i class="d" style="left:6.500px;top:7px;background:#5ac8f5"></i></div>
<svg class="abs" style="left:490.0px;top:337px" width="14" height="14"><use href="#i-trash"/></svg>
<div class="abs" style="left:186.25px;top:352.200px;width:1.500px;height:1.500px;border-radius:50%;background:#111"></div>
<div class="abs" style="left:245.25px;top:352.200px;width:1.500px;height:1.500px;border-radius:50%;background:#111"></div>
<div class="abs" style="left:393.25px;top:352.200px;width:1.500px;height:1.500px;border-radius:50%;background:#111"></div>
<div class="abs" style="left:432.25px;top:352.200px;width:1.500px;height:1.500px;border-radius:50%;background:#111"></div></div>
</body>
</html>
